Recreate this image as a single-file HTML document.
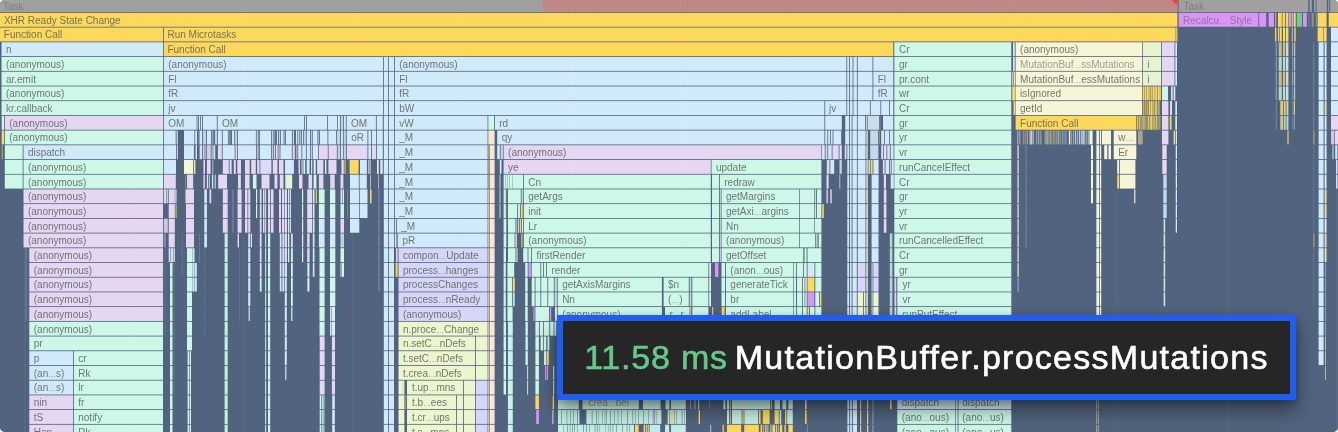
<!DOCTYPE html>
<html lang="en"><head><meta charset="utf-8"><title>Flame chart – MutationBuffer.processMutations</title>
<style>
html,body{margin:0;padding:0;background:#fff;}
body{width:1338px;height:432px;overflow:hidden;position:relative;font-family:"Liberation Sans",sans-serif;}
#chart{position:absolute;left:0;top:0;width:1338px;height:432px;border-radius:5px;overflow:hidden;background:#51637e;}
#chart svg{display:block;}
#chart svg text{font-family:"Liberation Sans",sans-serif;font-size:10px;}
#tip{position:absolute;left:557px;top:315px;width:739px;height:85px;box-sizing:border-box;border:6px solid #1f5eee;background:#262626;
 box-shadow:0 10px 18px rgba(0,0,0,.42),0 2px 6px rgba(0,0,0,.2);color:#fff;font-size:34px;line-height:73px;white-space:nowrap;padding-left:21.2px;letter-spacing:1.27px;-webkit-text-stroke:0.6px currentColor;}
#tip .t{opacity:.999;display:inline-block;will-change:opacity;}
#tip .ms{color:#66c98a;letter-spacing:0.8px;}
#tip .sp{letter-spacing:-2.6px;}
</style></head><body>
<div id="chart">
<svg width="1338" height="432" viewBox="0 0 1338 432">
<defs><filter id="soft" x="0" y="0" width="1338" height="432" filterUnits="userSpaceOnUse"><feGaussianBlur stdDeviation="0.33"/></filter><pattern id="hatch" width="2.2" height="2.2" patternUnits="userSpaceOnUse" patternTransform="rotate(45)"><rect width="2.2" height="2.2" fill="#b29292"/><rect width="1.4" height="2.2" fill="#c88080"/></pattern></defs>
<rect width="1338" height="432" fill="#51637e"/>
<g>
<rect x="0" y="0" width="1177.6" height="12.05" fill="#a0a0a0"/>
<rect x="1178.6" y="0" width="129.6" height="12.05" fill="#a0a0a0"/>
<rect x="1309.6" y="0" width="2.2" height="12.05" fill="#a0a0a0"/>
<rect x="1314" y="0" width="1.6" height="12.05" fill="#a0a0a0"/>
<rect x="1316.5" y="0" width="10.3" height="12.05" fill="#a0a0a0"/>
<rect x="1328.2" y="0" width="1" height="12.05" fill="#a0a0a0"/>
<rect x="1330.2" y="0" width="7.8" height="12.05" fill="#a0a0a0"/>
<rect x="0" y="12.85" width="1177.4" height="13.91" fill="#fcd95b"/>
<rect x="1178.6" y="12.85" width="79.8" height="13.91" fill="#d795f6"/>
<rect x="1259.2" y="12.85" width="7" height="13.91" fill="#d795f6"/>
<rect x="1268.6" y="12.85" width="5.4" height="13.91" fill="#d795f6"/>
<rect x="1275" y="12.85" width="1.3" height="13.91" fill="#b9ab68"/>
<rect x="1278" y="12.85" width="3.8" height="13.91" fill="#fcd95b"/>
<rect x="1282.5" y="12.85" width="2.7" height="13.91" fill="#fcd95b"/>
<rect x="1286" y="12.85" width="2.4" height="13.91" fill="#fcd95b"/>
<rect x="1289" y="12.85" width="2.2" height="13.91" fill="#d795f6"/>
<rect x="1291.6" y="12.85" width="1.4" height="13.91" fill="#b9b9b9"/>
<rect x="1293.6" y="12.85" width="2.1" height="13.91" fill="#fcd95b"/>
<rect x="1296.8" y="12.85" width="5.2" height="13.91" fill="#6ecf8b"/>
<rect x="1303" y="12.85" width="3.8" height="13.91" fill="#d795f6"/>
<rect x="1308.4" y="12.85" width="1.1" height="13.91" fill="#71839c"/>
<rect x="1311.6" y="12.85" width="2.1" height="13.91" fill="#9a966f"/>
<rect x="1315.8" y="12.85" width="1" height="13.91" fill="#8a9bb5"/>
<rect x="1317.6" y="12.85" width="9" height="13.91" fill="#fcd95b"/>
<rect x="1328.7" y="12.85" width="9.3" height="13.91" fill="#fcd95b"/>
<rect x="0" y="27.56" width="163" height="13.91" fill="#fcd95b"/>
<rect x="163.8" y="27.56" width="1011.8" height="13.91" fill="#fcd95b"/>
<rect x="1176.2" y="27.56" width="1.2" height="13.91" fill="#fcd95b"/>
<rect x="1275" y="27.56" width="1.3" height="13.91" fill="#fcd95b"/>
<rect x="1278" y="27.56" width="1.3" height="13.91" fill="#fcd95b"/>
<rect x="1280" y="27.56" width="1.8" height="13.91" fill="#fcd95b"/>
<rect x="1283" y="27.56" width="2.2" height="13.91" fill="#fcd95b"/>
<rect x="1286" y="27.56" width="2.4" height="13.91" fill="#fcd95b"/>
<rect x="1291.8" y="27.56" width="0.8" height="13.91" fill="#e5d6f2"/>
<rect x="1294.3" y="27.56" width="1.4" height="13.91" fill="#fcd95b"/>
<rect x="1317.6" y="27.56" width="5.8" height="13.91" fill="#fcd95b"/>
<rect x="1323.9" y="27.56" width="2.7" height="13.91" fill="#fcd95b"/>
<rect x="1331" y="27.56" width="7" height="13.91" fill="#d0eaf9"/>
<rect x="1.5" y="42.27" width="161.5" height="13.91" fill="#d0eaf9"/>
<rect x="1.5" y="56.98" width="161.5" height="13.91" fill="#cdf8e8"/>
<rect x="1.5" y="71.69" width="161.5" height="13.91" fill="#cdf8e8"/>
<rect x="1.5" y="86.4" width="161.5" height="13.91" fill="#cdf8e8"/>
<rect x="1.5" y="101.11" width="161.5" height="13.91" fill="#cdf8e8"/>
<rect x="1.7" y="115.82" width="2.3" height="13.91" fill="#d6f3ea"/>
<rect x="4.8" y="115.82" width="158.2" height="13.91" fill="#e5d6f2"/>
<rect x="1.7" y="130.53" width="2.3" height="13.91" fill="#fcd95b"/>
<rect x="4.8" y="130.53" width="158.2" height="13.91" fill="#cdf8e8"/>
<rect x="1.7" y="145.24" width="1" height="13.91" fill="#c9b15c"/>
<rect x="4.8" y="145.24" width="17.9" height="13.91" fill="#cdf8e8"/>
<rect x="23.5" y="145.24" width="139.5" height="13.91" fill="#d0eaf9"/>
<rect x="4.8" y="159.95" width="17.9" height="13.91" fill="#cdf8e8"/>
<rect x="23.5" y="159.95" width="139.5" height="13.91" fill="#cdf8e8"/>
<rect x="4.8" y="174.66" width="17.9" height="13.91" fill="#cdf8e8"/>
<rect x="23.5" y="174.66" width="139.5" height="13.91" fill="#cdf8e8"/>
<rect x="23.5" y="189.37" width="139.5" height="13.91" fill="#e5d6f2"/>
<rect x="23.5" y="204.08" width="139.5" height="13.91" fill="#e5d6f2"/>
<rect x="23.5" y="218.79" width="139.5" height="13.91" fill="#e5d6f2"/>
<rect x="23.5" y="233.5" width="139.5" height="13.91" fill="#e5d6f2"/>
<rect x="25.2" y="248.21" width="2" height="13.91" fill="#64768f"/>
<rect x="29.3" y="248.21" width="133.7" height="13.91" fill="#e5d6f2"/>
<rect x="25.2" y="262.92" width="2" height="13.91" fill="#64768f"/>
<rect x="29.3" y="262.92" width="133.7" height="13.91" fill="#e5d6f2"/>
<rect x="25.2" y="277.63" width="2" height="13.91" fill="#64768f"/>
<rect x="29.3" y="277.63" width="133.7" height="13.91" fill="#e5d6f2"/>
<rect x="25.2" y="292.34" width="2" height="13.91" fill="#64768f"/>
<rect x="29.3" y="292.34" width="133.7" height="13.91" fill="#e5d6f2"/>
<rect x="25.2" y="307.05" width="2" height="13.91" fill="#64768f"/>
<rect x="29.3" y="307.05" width="133.7" height="13.91" fill="#e5d6f2"/>
<rect x="29.3" y="321.76" width="133.7" height="13.91" fill="#cdf8e8"/>
<rect x="29.3" y="336.47" width="133.7" height="13.91" fill="#cdf8e8"/>
<rect x="29.3" y="351.18" width="43.7" height="13.91" fill="#d0eaf9"/>
<rect x="73.8" y="351.18" width="89.2" height="13.91" fill="#cdf8e8"/>
<rect x="29.3" y="365.89" width="43.7" height="13.91" fill="#d0eaf9"/>
<rect x="73.8" y="365.89" width="89.2" height="13.91" fill="#cdf8e8"/>
<rect x="29.3" y="380.6" width="43.7" height="13.91" fill="#d0eaf9"/>
<rect x="73.8" y="380.6" width="89.2" height="13.91" fill="#cdf8e8"/>
<rect x="29.3" y="395.31" width="43.7" height="13.91" fill="#e5d6f2"/>
<rect x="73.8" y="395.31" width="89.2" height="13.91" fill="#cdf8e8"/>
<rect x="29.3" y="410.02" width="43.7" height="13.91" fill="#e5d6f2"/>
<rect x="73.8" y="410.02" width="89.2" height="13.91" fill="#cdf8e8"/>
<rect x="29.3" y="424.73" width="43.7" height="13.91" fill="#e5d6f2"/>
<rect x="73.8" y="424.73" width="89.2" height="13.91" fill="#cdf8e8"/>
<rect x="163.8" y="42.27" width="729.5" height="13.91" fill="#fcd95b"/>
<rect x="163.8" y="56.98" width="219.2" height="13.91" fill="#d0eaf9"/>
<rect x="163.8" y="71.69" width="219.2" height="13.91" fill="#d0eaf9"/>
<rect x="163.8" y="86.4" width="219.2" height="13.91" fill="#d0eaf9"/>
<rect x="163.8" y="101.11" width="219.2" height="13.91" fill="#d0eaf9"/>
<rect x="163.8" y="115.82" width="32.8" height="13.91" fill="#d0eaf9"/>
<rect x="197.4" y="115.82" width="0.8" height="13.91" fill="#d0eaf9"/>
<rect x="199" y="115.82" width="1" height="13.91" fill="#d0eaf9"/>
<rect x="200.8" y="115.82" width="1.3" height="13.91" fill="#d0eaf9"/>
<rect x="202.9" y="115.82" width="13.9" height="13.91" fill="#d0eaf9"/>
<rect x="217.6" y="115.82" width="86.6" height="13.91" fill="#d0eaf9"/>
<rect x="305" y="115.82" width="1" height="13.91" fill="#d0eaf9"/>
<rect x="306.8" y="115.82" width="20.4" height="13.91" fill="#d0eaf9"/>
<rect x="328" y="115.82" width="9.2" height="13.91" fill="#d0eaf9"/>
<rect x="338" y="115.82" width="2" height="13.91" fill="#d0eaf9"/>
<rect x="340.8" y="115.82" width="2.2" height="13.91" fill="#bfd2e4"/>
<rect x="343.8" y="115.82" width="2" height="13.91" fill="#d0eaf9"/>
<rect x="346.6" y="115.82" width="29.3" height="13.91" fill="#d0eaf9"/>
<rect x="376.7" y="115.82" width="6.1" height="13.91" fill="#d0eaf9"/>
<rect x="163.8" y="130.53" width="11.9" height="13.91" fill="#d0eaf9"/>
<rect x="176.5" y="130.53" width="1.4" height="13.91" fill="#bfd2e4"/>
<rect x="184" y="130.53" width="10.4" height="13.91" fill="#d0eaf9"/>
<rect x="195.2" y="130.53" width="1.8" height="13.91" fill="#d0eaf9"/>
<rect x="197.8" y="130.53" width="0.9" height="13.91" fill="#7488a4"/>
<rect x="199.5" y="130.53" width="2.6" height="13.91" fill="#d0eaf9"/>
<rect x="202.9" y="130.53" width="3.3" height="13.91" fill="#bfd2e4"/>
<rect x="207" y="130.53" width="4.1" height="13.91" fill="#d0eaf9"/>
<rect x="211.9" y="130.53" width="0.6" height="13.91" fill="#d0eaf9"/>
<rect x="213.3" y="130.53" width="0.8" height="13.91" fill="#7488a4"/>
<rect x="214.9" y="130.53" width="2.1" height="13.91" fill="#bfd2e4"/>
<rect x="217.8" y="130.53" width="4.1" height="13.91" fill="#d0eaf9"/>
<rect x="222.7" y="130.53" width="5.2" height="13.91" fill="#d0eaf9"/>
<rect x="228.7" y="130.53" width="0.6" height="13.91" fill="#d0eaf9"/>
<rect x="230.1" y="130.53" width="1.1" height="13.91" fill="#7488a4"/>
<rect x="232" y="130.53" width="2.3" height="13.91" fill="#d0eaf9"/>
<rect x="235.1" y="130.53" width="2.1" height="13.91" fill="#bfd2e4"/>
<rect x="238" y="130.53" width="17.9" height="13.91" fill="#d0eaf9"/>
<rect x="256.7" y="130.53" width="1.1" height="13.91" fill="#d0eaf9"/>
<rect x="258.6" y="130.53" width="0.4" height="13.91" fill="#bfd2e4"/>
<rect x="259.8" y="130.53" width="11.4" height="13.91" fill="#d0eaf9"/>
<rect x="272" y="130.53" width="1.5" height="13.91" fill="#bfd2e4"/>
<rect x="274.3" y="130.53" width="0.4" height="13.91" fill="#d0eaf9"/>
<rect x="275.5" y="130.53" width="0.6" height="13.91" fill="#7488a4"/>
<rect x="276.9" y="130.53" width="1.1" height="13.91" fill="#d0eaf9"/>
<rect x="278.8" y="130.53" width="1.4" height="13.91" fill="#bfd2e4"/>
<rect x="281" y="130.53" width="2.6" height="13.91" fill="#d0eaf9"/>
<rect x="284.4" y="130.53" width="0.7" height="13.91" fill="#bfd2e4"/>
<rect x="285.9" y="130.53" width="6" height="13.91" fill="#d0eaf9"/>
<rect x="292.7" y="130.53" width="1.4" height="13.91" fill="#bfd2e4"/>
<rect x="294.9" y="130.53" width="0.35" height="13.91" fill="#7488a4"/>
<rect x="296" y="130.53" width="1.4" height="13.91" fill="#d0eaf9"/>
<rect x="298.2" y="130.53" width="1.2" height="13.91" fill="#d0eaf9"/>
<rect x="300.2" y="130.53" width="0.8" height="13.91" fill="#bfd2e4"/>
<rect x="301.8" y="130.53" width="1.4" height="13.91" fill="#d0eaf9"/>
<rect x="304" y="130.53" width="1.9" height="13.91" fill="#bfd2e4"/>
<rect x="306.7" y="130.53" width="3.3" height="13.91" fill="#d0eaf9"/>
<rect x="310.8" y="130.53" width="1.1" height="13.91" fill="#bfd2e4"/>
<rect x="312.7" y="130.53" width="4.8" height="13.91" fill="#d0eaf9"/>
<rect x="318.3" y="130.53" width="0.9" height="13.91" fill="#bfd2e4"/>
<rect x="320" y="130.53" width="7.5" height="13.91" fill="#d0eaf9"/>
<rect x="328.3" y="130.53" width="7.9" height="13.91" fill="#d0eaf9"/>
<rect x="337" y="130.53" width="3.2" height="13.91" fill="#bfd2e4"/>
<rect x="341" y="130.53" width="1.9" height="13.91" fill="#d0eaf9"/>
<rect x="343.7" y="130.53" width="2.2" height="13.91" fill="#bfd2e4"/>
<rect x="346.7" y="130.53" width="20.8" height="13.91" fill="#d0eaf9"/>
<rect x="368.3" y="130.53" width="2.8" height="13.91" fill="#d0eaf9"/>
<rect x="371.9" y="130.53" width="4.3" height="13.91" fill="#d0eaf9"/>
<rect x="377" y="130.53" width="5.8" height="13.91" fill="#d0eaf9"/>
<rect x="163.8" y="145.24" width="12.2" height="13.91" fill="#d0eaf9"/>
<rect x="176.8" y="145.24" width="1.1" height="13.91" fill="#e5d6f2"/>
<rect x="184" y="145.24" width="9.9" height="13.91" fill="#d0eaf9"/>
<rect x="194.7" y="145.24" width="0.35" height="13.91" fill="#7488a4"/>
<rect x="195.6" y="145.24" width="1.4" height="13.91" fill="#d0eaf9"/>
<rect x="199.6" y="145.24" width="2.5" height="13.91" fill="#e5d6f2"/>
<rect x="202.9" y="145.24" width="1.7" height="13.91" fill="#d5cde5"/>
<rect x="205.4" y="145.24" width="0.8" height="13.91" fill="#d0eaf9"/>
<rect x="207" y="145.24" width="3.8" height="13.91" fill="#d5cde5"/>
<rect x="211.6" y="145.24" width="1" height="13.91" fill="#d0eaf9"/>
<rect x="213.4" y="145.24" width="1.8" height="13.91" fill="#d0eaf9"/>
<rect x="217.9" y="145.24" width="3.9" height="13.91" fill="#e5d6f2"/>
<rect x="222.6" y="145.24" width="12.1" height="13.91" fill="#d0eaf9"/>
<rect x="235.5" y="145.24" width="1.7" height="13.91" fill="#e5d6f2"/>
<rect x="238" y="145.24" width="18" height="13.91" fill="#d0eaf9"/>
<rect x="256.8" y="145.24" width="1" height="13.91" fill="#e5d6f2"/>
<rect x="258.6" y="145.24" width="0.4" height="13.91" fill="#d0eaf9"/>
<rect x="259.8" y="145.24" width="11.4" height="13.91" fill="#d0eaf9"/>
<rect x="272" y="145.24" width="1.2" height="13.91" fill="#bfd2e4"/>
<rect x="274" y="145.24" width="1.2" height="13.91" fill="#e5d6f2"/>
<rect x="276" y="145.24" width="1.7" height="13.91" fill="#d0eaf9"/>
<rect x="278.5" y="145.24" width="1.1" height="13.91" fill="#e5d6f2"/>
<rect x="280.4" y="145.24" width="11.5" height="13.91" fill="#d0eaf9"/>
<rect x="292.7" y="145.24" width="2.1" height="13.91" fill="#e5d6f2"/>
<rect x="295.6" y="145.24" width="0.35" height="13.91" fill="#7488a4"/>
<rect x="296.4" y="145.24" width="1" height="13.91" fill="#e5d6f2"/>
<rect x="298.2" y="145.24" width="3.3" height="13.91" fill="#d0eaf9"/>
<rect x="302.3" y="145.24" width="3.6" height="13.91" fill="#d0eaf9"/>
<rect x="306.7" y="145.24" width="3.3" height="13.91" fill="#d0eaf9"/>
<rect x="310.8" y="145.24" width="1.1" height="13.91" fill="#e5d6f2"/>
<rect x="312.7" y="145.24" width="5.5" height="13.91" fill="#d0eaf9"/>
<rect x="319" y="145.24" width="8.8" height="13.91" fill="#e5d6f2"/>
<rect x="328.6" y="145.24" width="8.3" height="13.91" fill="#e5d6f2"/>
<rect x="337.7" y="145.24" width="2.5" height="13.91" fill="#bfd2e4"/>
<rect x="341" y="145.24" width="1.9" height="13.91" fill="#d0eaf9"/>
<rect x="343.7" y="145.24" width="2.4" height="13.91" fill="#bfd2e4"/>
<rect x="346.9" y="145.24" width="20.6" height="13.91" fill="#e5d6f2"/>
<rect x="368.3" y="145.24" width="2.8" height="13.91" fill="#d0eaf9"/>
<rect x="371.9" y="145.24" width="4.3" height="13.91" fill="#e5d6f2"/>
<rect x="377" y="145.24" width="5.8" height="13.91" fill="#d0eaf9"/>
<rect x="163.8" y="159.95" width="12.2" height="13.91" fill="#d0eaf9"/>
<rect x="184" y="159.95" width="9.2" height="13.91" fill="#f6f5d5"/>
<rect x="194" y="159.95" width="1.4" height="13.91" fill="#f1e7a6"/>
<rect x="203.4" y="159.95" width="1.6" height="13.91" fill="#e5d6f2"/>
<rect x="206.9" y="159.95" width="3.7" height="13.91" fill="#e5d6f2"/>
<rect x="212.5" y="159.95" width="0.7" height="13.91" fill="#e5d6f2"/>
<rect x="222.8" y="159.95" width="6" height="13.91" fill="#e5d6f2"/>
<rect x="229.6" y="159.95" width="2" height="13.91" fill="#d0eaf9"/>
<rect x="233.8" y="159.95" width="2" height="13.91" fill="#e5d6f2"/>
<rect x="237.3" y="159.95" width="3.7" height="13.91" fill="#e5d6f2"/>
<rect x="245" y="159.95" width="4.7" height="13.91" fill="#e5d6f2"/>
<rect x="251.2" y="159.95" width="4.6" height="13.91" fill="#e5d6f2"/>
<rect x="257.2" y="159.95" width="2.3" height="13.91" fill="#e5d6f2"/>
<rect x="260.3" y="159.95" width="11.1" height="13.91" fill="#dcdaf5"/>
<rect x="272.8" y="159.95" width="4.7" height="13.91" fill="#e5d6f2"/>
<rect x="279" y="159.95" width="4.5" height="13.91" fill="#e5d6f2"/>
<rect x="285" y="159.95" width="8.9" height="13.91" fill="#d0eaf9"/>
<rect x="298.5" y="159.95" width="1.5" height="13.91" fill="#e5d6f2"/>
<rect x="301.5" y="159.95" width="1.1" height="13.91" fill="#e5d6f2"/>
<rect x="303.4" y="159.95" width="1.8" height="13.91" fill="#cdf8e8"/>
<rect x="306.7" y="159.95" width="2.9" height="13.91" fill="#d0eaf9"/>
<rect x="311" y="159.95" width="1.2" height="13.91" fill="#e5d6f2"/>
<rect x="313.6" y="159.95" width="2.1" height="13.91" fill="#cdf8e8"/>
<rect x="317.1" y="159.95" width="6.3" height="13.91" fill="#e5d6f2"/>
<rect x="325" y="159.95" width="1.4" height="13.91" fill="#cdf8e8"/>
<rect x="328.4" y="159.95" width="8.1" height="13.91" fill="#e5d6f2"/>
<rect x="341.4" y="159.95" width="2.4" height="13.91" fill="#e5d6f2"/>
<rect x="344.6" y="159.95" width="0.9" height="13.91" fill="#fcd95b"/>
<rect x="349.6" y="159.95" width="9" height="13.91" fill="#fcd95b"/>
<rect x="360" y="159.95" width="6.9" height="13.91" fill="#d0eaf9"/>
<rect x="368.3" y="159.95" width="1.1" height="13.91" fill="#d0eaf9"/>
<rect x="370.2" y="159.95" width="0.6" height="13.91" fill="#f1e7a6"/>
<rect x="377" y="159.95" width="1.7" height="13.91" fill="#cdf8e8"/>
<rect x="380.2" y="159.95" width="2.6" height="13.91" fill="#e5d6f2"/>
<rect x="163.8" y="174.66" width="12" height="13.91" fill="#e5d6f2"/>
<rect x="185.5" y="174.66" width="0.35" height="13.91" fill="#fcd95b"/>
<rect x="187" y="174.66" width="6.2" height="13.91" fill="#e5d6f2"/>
<rect x="203.4" y="174.66" width="1.4" height="13.91" fill="#e5d6f2"/>
<rect x="206.8" y="174.66" width="1.4" height="13.91" fill="#e5d6f2"/>
<rect x="209" y="174.66" width="0.7" height="13.91" fill="#d0eaf9"/>
<rect x="212" y="174.66" width="1.2" height="13.91" fill="#cdf8e8"/>
<rect x="214.7" y="174.66" width="1" height="13.91" fill="#e5d6f2"/>
<rect x="218.2" y="174.66" width="8.8" height="13.91" fill="#e5d6f2"/>
<rect x="238" y="174.66" width="2.9" height="13.91" fill="#e5d6f2"/>
<rect x="245" y="174.66" width="4.6" height="13.91" fill="#e5d6f2"/>
<rect x="252.9" y="174.66" width="3.6" height="13.91" fill="#cdf8e8"/>
<rect x="261.5" y="174.66" width="8" height="13.91" fill="#e5d6f2"/>
<rect x="274.5" y="174.66" width="2.9" height="13.91" fill="#e5d6f2"/>
<rect x="279.8" y="174.66" width="3.7" height="13.91" fill="#e5d6f2"/>
<rect x="285.3" y="174.66" width="6.9" height="13.91" fill="#e2f3d6"/>
<rect x="299" y="174.66" width="3.5" height="13.91" fill="#e5d6f2"/>
<rect x="308.5" y="174.66" width="3.6" height="13.91" fill="#e5d6f2"/>
<rect x="313.6" y="174.66" width="2.8" height="13.91" fill="#cdf8e8"/>
<rect x="318.9" y="174.66" width="4.5" height="13.91" fill="#e5d6f2"/>
<rect x="330.2" y="174.66" width="4.5" height="13.91" fill="#e5d6f2"/>
<rect x="340.5" y="174.66" width="2.9" height="13.91" fill="#e5d6f2"/>
<rect x="350" y="174.66" width="8.8" height="13.91" fill="#d0eaf9"/>
<rect x="359.6" y="174.66" width="7.2" height="13.91" fill="#d0eaf9"/>
<rect x="370" y="174.66" width="0.7" height="13.91" fill="#e5d6f2"/>
<rect x="378" y="174.66" width="0.6" height="13.91" fill="#d0eaf9"/>
<rect x="163.8" y="189.37" width="2.2" height="13.91" fill="#e5d6f2"/>
<rect x="166.6" y="189.37" width="1.2" height="13.91" fill="#cdf8e8"/>
<rect x="175.3" y="189.37" width="1.2" height="13.91" fill="#cdf8e8"/>
<rect x="175.6" y="204.08" width="0.9" height="13.91" fill="#fcd95b"/>
<rect x="163.8" y="218.79" width="4" height="13.91" fill="#cfc6e0"/>
<rect x="163.8" y="233.5" width="1.8" height="13.91" fill="#8b93ad"/>
<rect x="168.7" y="189.37" width="6.1" height="13.91" fill="#e5d6f2"/>
<rect x="168.7" y="204.08" width="6.1" height="13.91" fill="#e5d6f2"/>
<rect x="168.7" y="218.79" width="6.1" height="13.91" fill="#e5d6f2"/>
<rect x="168.7" y="233.5" width="6.1" height="13.91" fill="#e5d6f2"/>
<rect x="168.7" y="248.21" width="1.5" height="13.91" fill="#d0eaf9"/>
<rect x="170.6" y="248.21" width="2.6" height="13.91" fill="#e5d6f2"/>
<rect x="173.6" y="248.21" width="1.2" height="13.91" fill="#cdf8e8"/>
<rect x="170" y="262.92" width="2.5" height="13.91" fill="#cdf8e8"/>
<rect x="170" y="277.63" width="2.5" height="13.91" fill="#cdf8e8"/>
<rect x="170" y="292.34" width="2.5" height="13.91" fill="#cdf8e8"/>
<rect x="170" y="307.05" width="2.5" height="13.91" fill="#cdf8e8"/>
<rect x="170" y="321.76" width="2.5" height="13.91" fill="#cdf8e8"/>
<rect x="170" y="336.47" width="2.5" height="13.91" fill="#cdf8e8"/>
<rect x="170" y="351.18" width="2.5" height="13.91" fill="#cdf8e8"/>
<rect x="170" y="365.89" width="2.5" height="13.91" fill="#cdf8e8"/>
<rect x="170" y="380.6" width="2.5" height="13.91" fill="#cdf8e8"/>
<rect x="170" y="395.31" width="2.5" height="13.91" fill="#cdf8e8"/>
<rect x="170" y="410.02" width="2.5" height="13.91" fill="#cdf8e8"/>
<rect x="170" y="424.73" width="2.5" height="13.91" fill="#cdf8e8"/>
<rect x="164.6" y="248.21" width="0.8" height="13.91" fill="#66788f"/>
<rect x="164.6" y="262.92" width="0.8" height="13.91" fill="#66788f"/>
<rect x="164.6" y="277.63" width="0.8" height="13.91" fill="#66788f"/>
<rect x="164.6" y="292.34" width="0.8" height="13.91" fill="#66788f"/>
<rect x="164.6" y="307.05" width="0.8" height="13.91" fill="#66788f"/>
<rect x="164.6" y="321.76" width="0.8" height="13.91" fill="#66788f"/>
<rect x="173.8" y="262.92" width="0.8" height="13.91" fill="#66788f"/>
<rect x="173.8" y="277.63" width="0.8" height="13.91" fill="#66788f"/>
<rect x="173.8" y="292.34" width="0.8" height="13.91" fill="#66788f"/>
<rect x="173.8" y="307.05" width="0.8" height="13.91" fill="#66788f"/>
<rect x="173.8" y="321.76" width="0.8" height="13.91" fill="#66788f"/>
<rect x="173.8" y="336.47" width="0.8" height="13.91" fill="#66788f"/>
<rect x="173.8" y="351.18" width="0.8" height="13.91" fill="#66788f"/>
<rect x="173.8" y="365.89" width="0.8" height="13.91" fill="#66788f"/>
<rect x="173.8" y="380.6" width="0.8" height="13.91" fill="#66788f"/>
<rect x="186" y="189.37" width="8" height="13.91" fill="#e5d6f2"/>
<rect x="186" y="204.08" width="8" height="13.91" fill="#e5d6f2"/>
<rect x="186" y="218.79" width="8" height="13.91" fill="#e5d6f2"/>
<rect x="186" y="233.5" width="8" height="13.91" fill="#e5d6f2"/>
<rect x="185.2" y="189.37" width="0.6" height="13.91" fill="#fcd95b"/>
<rect x="187" y="248.21" width="5" height="13.91" fill="#cdf8e8"/>
<rect x="187" y="262.92" width="5" height="13.91" fill="#cdf8e8"/>
<rect x="187" y="277.63" width="5" height="13.91" fill="#cdf8e8"/>
<rect x="187" y="292.34" width="5" height="13.91" fill="#cdf8e8"/>
<rect x="187" y="307.05" width="5" height="13.91" fill="#cdf8e8"/>
<rect x="187" y="321.76" width="5" height="13.91" fill="#cdf8e8"/>
<rect x="187" y="336.47" width="5" height="13.91" fill="#cdf8e8"/>
<rect x="192.3" y="248.21" width="2.2" height="13.91" fill="#d0eaf9"/>
<rect x="192.3" y="262.92" width="2.2" height="13.91" fill="#d0eaf9"/>
<rect x="192.3" y="277.63" width="2.2" height="13.91" fill="#d0eaf9"/>
<rect x="194.9" y="262.92" width="1.9" height="13.91" fill="#d0eaf9"/>
<rect x="194.9" y="277.63" width="1.9" height="13.91" fill="#d0eaf9"/>
<rect x="187.6" y="351.18" width="1.4" height="13.91" fill="#cdf8e8"/>
<rect x="187.6" y="365.89" width="1.4" height="13.91" fill="#cdf8e8"/>
<rect x="187.6" y="380.6" width="1.4" height="13.91" fill="#cdf8e8"/>
<rect x="187.6" y="395.31" width="1.4" height="13.91" fill="#cdf8e8"/>
<rect x="187.6" y="410.02" width="1.4" height="13.91" fill="#cdf8e8"/>
<rect x="187.6" y="424.73" width="1.4" height="13.91" fill="#cdf8e8"/>
<rect x="189.6" y="351.18" width="1.4" height="13.91" fill="#cdf8e8"/>
<rect x="189.6" y="365.89" width="1.4" height="13.91" fill="#cdf8e8"/>
<rect x="189.6" y="380.6" width="1.4" height="13.91" fill="#cdf8e8"/>
<rect x="189.6" y="395.31" width="1.4" height="13.91" fill="#cdf8e8"/>
<rect x="189.6" y="410.02" width="1.4" height="13.91" fill="#cdf8e8"/>
<rect x="189.6" y="424.73" width="1.4" height="13.91" fill="#cdf8e8"/>
<rect x="181.8" y="233.5" width="0.8" height="13.91" fill="#6b7c97"/>
<rect x="181.8" y="248.21" width="0.8" height="13.91" fill="#6b7c97"/>
<rect x="181.8" y="262.92" width="0.8" height="13.91" fill="#6b7c97"/>
<rect x="199.2" y="233.5" width="0.8" height="13.91" fill="#6b7c97"/>
<rect x="199.2" y="248.21" width="0.8" height="13.91" fill="#6b7c97"/>
<rect x="204.3" y="189.37" width="2.6" height="13.91" fill="#d0eaf9"/>
<rect x="204.3" y="204.08" width="2.6" height="13.91" fill="#d0eaf9"/>
<rect x="204.3" y="218.79" width="2.6" height="13.91" fill="#d0eaf9"/>
<rect x="204.3" y="233.5" width="2.6" height="13.91" fill="#d0eaf9"/>
<rect x="204.4" y="248.21" width="0.8" height="13.91" fill="#66788f"/>
<rect x="204.4" y="262.92" width="0.8" height="13.91" fill="#66788f"/>
<rect x="204.4" y="277.63" width="0.8" height="13.91" fill="#66788f"/>
<rect x="204.4" y="292.34" width="0.8" height="13.91" fill="#66788f"/>
<rect x="204.4" y="307.05" width="0.8" height="13.91" fill="#66788f"/>
<rect x="204.4" y="321.76" width="0.8" height="13.91" fill="#66788f"/>
<rect x="209.5" y="189.37" width="1.7" height="13.91" fill="#e5d6f2"/>
<rect x="222.8" y="189.37" width="4.9" height="13.91" fill="#e5d6f2"/>
<rect x="222.8" y="204.08" width="4.9" height="13.91" fill="#e5d6f2"/>
<rect x="222.8" y="218.79" width="4.9" height="13.91" fill="#e5d6f2"/>
<rect x="224.6" y="233.5" width="3.1" height="13.91" fill="#c2efdf"/>
<rect x="224.6" y="248.21" width="3.1" height="13.91" fill="#c2efdf"/>
<rect x="224.6" y="262.92" width="3.1" height="13.91" fill="#c2efdf"/>
<rect x="224.6" y="277.63" width="3.1" height="13.91" fill="#c2efdf"/>
<rect x="224.6" y="292.34" width="3.1" height="13.91" fill="#c2efdf"/>
<rect x="224.6" y="307.05" width="3.1" height="13.91" fill="#c2efdf"/>
<rect x="224.6" y="321.76" width="3.1" height="13.91" fill="#c2efdf"/>
<rect x="224.6" y="336.47" width="3.1" height="13.91" fill="#c2efdf"/>
<rect x="224.6" y="351.18" width="3.1" height="13.91" fill="#c2efdf"/>
<rect x="224.6" y="365.89" width="3.1" height="13.91" fill="#c2efdf"/>
<rect x="224.6" y="380.6" width="3.1" height="13.91" fill="#c2efdf"/>
<rect x="224.6" y="395.31" width="3.1" height="13.91" fill="#c2efdf"/>
<rect x="224.6" y="410.02" width="3.1" height="13.91" fill="#c2efdf"/>
<rect x="224.6" y="424.73" width="3.1" height="13.91" fill="#c2efdf"/>
<rect x="232.4" y="189.37" width="1" height="13.91" fill="#7d8fa8"/>
<rect x="232.4" y="204.08" width="1" height="13.91" fill="#7d8fa8"/>
<rect x="232.4" y="218.79" width="1" height="13.91" fill="#7d8fa8"/>
<rect x="237.6" y="189.37" width="4" height="13.91" fill="#e5d6f2"/>
<rect x="237.6" y="204.08" width="4" height="13.91" fill="#e5d6f2"/>
<rect x="237.6" y="218.79" width="4" height="13.91" fill="#e5d6f2"/>
<rect x="237.6" y="233.5" width="1.4" height="13.91" fill="#e5d6f2"/>
<rect x="239" y="248.21" width="0.8" height="13.91" fill="#66788f"/>
<rect x="239" y="262.92" width="0.8" height="13.91" fill="#66788f"/>
<rect x="239" y="277.63" width="0.8" height="13.91" fill="#66788f"/>
<rect x="239" y="292.34" width="0.8" height="13.91" fill="#66788f"/>
<rect x="239" y="307.05" width="0.8" height="13.91" fill="#66788f"/>
<rect x="245" y="189.37" width="2.5" height="13.91" fill="#e5d6f2"/>
<rect x="245" y="204.08" width="2.5" height="13.91" fill="#e5d6f2"/>
<rect x="245" y="218.79" width="2.5" height="13.91" fill="#e5d6f2"/>
<rect x="248.2" y="189.37" width="2.1" height="13.91" fill="#e5d6f2"/>
<rect x="248.2" y="204.08" width="2.1" height="13.91" fill="#e5d6f2"/>
<rect x="248.2" y="218.79" width="2.1" height="13.91" fill="#e5d6f2"/>
<rect x="248.2" y="233.5" width="2.1" height="13.91" fill="#e5d6f2"/>
<rect x="248.2" y="248.21" width="2.1" height="13.91" fill="#d0eaf9"/>
<rect x="248.2" y="262.92" width="2.1" height="13.91" fill="#d0eaf9"/>
<rect x="248.2" y="277.63" width="2.1" height="13.91" fill="#d0eaf9"/>
<rect x="248.2" y="292.34" width="2.1" height="13.91" fill="#d0eaf9"/>
<rect x="251" y="233.5" width="1" height="13.91" fill="#d0eaf9"/>
<rect x="248.6" y="307.05" width="1.2" height="13.91" fill="#d0eaf9"/>
<rect x="259.8" y="189.37" width="1.8" height="13.91" fill="#e5d6f2"/>
<rect x="259.8" y="204.08" width="1.8" height="13.91" fill="#e5d6f2"/>
<rect x="259.8" y="218.79" width="1.8" height="13.91" fill="#e5d6f2"/>
<rect x="259.8" y="233.5" width="1.8" height="13.91" fill="#e5d6f2"/>
<rect x="259.8" y="248.21" width="1.8" height="13.91" fill="#e5d6f2"/>
<rect x="259.8" y="262.92" width="1.8" height="13.91" fill="#e5d6f2"/>
<rect x="259.8" y="277.63" width="1.8" height="13.91" fill="#cdf8e8"/>
<rect x="263" y="189.37" width="1.5" height="13.91" fill="#e5d6f2"/>
<rect x="263" y="204.08" width="1.5" height="13.91" fill="#e5d6f2"/>
<rect x="263" y="218.79" width="1.5" height="13.91" fill="#e5d6f2"/>
<rect x="265" y="189.37" width="1.2" height="13.91" fill="#b5e2d4"/>
<rect x="265" y="204.08" width="1.2" height="13.91" fill="#b5e2d4"/>
<rect x="265" y="218.79" width="1.2" height="13.91" fill="#b5e2d4"/>
<rect x="265" y="233.5" width="1.2" height="13.91" fill="#b5e2d4"/>
<rect x="265" y="248.21" width="1.2" height="13.91" fill="#b5e2d4"/>
<rect x="265" y="262.92" width="1.2" height="13.91" fill="#b5e2d4"/>
<rect x="265" y="277.63" width="1.2" height="13.91" fill="#b5e2d4"/>
<rect x="265" y="292.34" width="1.2" height="13.91" fill="#b5e2d4"/>
<rect x="265" y="307.05" width="1.2" height="13.91" fill="#b5e2d4"/>
<rect x="265" y="321.76" width="1.2" height="13.91" fill="#b5e2d4"/>
<rect x="265" y="336.47" width="1.2" height="13.91" fill="#b5e2d4"/>
<rect x="265" y="351.18" width="1.2" height="13.91" fill="#b5e2d4"/>
<rect x="265" y="365.89" width="1.2" height="13.91" fill="#b5e2d4"/>
<rect x="265" y="380.6" width="1.2" height="13.91" fill="#b5e2d4"/>
<rect x="265" y="395.31" width="1.2" height="13.91" fill="#b5e2d4"/>
<rect x="265" y="410.02" width="1.2" height="13.91" fill="#b5e2d4"/>
<rect x="265" y="424.73" width="1.2" height="13.91" fill="#b5e2d4"/>
<rect x="268" y="189.37" width="2.2" height="13.91" fill="#e5d6f2"/>
<rect x="268" y="204.08" width="2.2" height="13.91" fill="#e5d6f2"/>
<rect x="268" y="218.79" width="2.2" height="13.91" fill="#e5d6f2"/>
<rect x="268" y="233.5" width="2.2" height="13.91" fill="#cdf8e8"/>
<rect x="268" y="248.21" width="2.2" height="13.91" fill="#cdf8e8"/>
<rect x="268" y="262.92" width="2.2" height="13.91" fill="#cdf8e8"/>
<rect x="268" y="277.63" width="2.2" height="13.91" fill="#cdf8e8"/>
<rect x="268" y="292.34" width="2.2" height="13.91" fill="#cdf8e8"/>
<rect x="268" y="307.05" width="2.2" height="13.91" fill="#cdf8e8"/>
<rect x="268" y="321.76" width="2.2" height="13.91" fill="#cdf8e8"/>
<rect x="268" y="336.47" width="2.2" height="13.91" fill="#cdf8e8"/>
<rect x="268" y="351.18" width="2.2" height="13.91" fill="#cdf8e8"/>
<rect x="268" y="365.89" width="2.2" height="13.91" fill="#cdf8e8"/>
<rect x="268" y="380.6" width="2.2" height="13.91" fill="#cdf8e8"/>
<rect x="268" y="395.31" width="2.2" height="13.91" fill="#cdf8e8"/>
<rect x="268" y="410.02" width="2.2" height="13.91" fill="#cdf8e8"/>
<rect x="268" y="424.73" width="2.2" height="13.91" fill="#cdf8e8"/>
<rect x="271" y="189.37" width="2.5" height="13.91" fill="#e5d6f2"/>
<rect x="271" y="204.08" width="2.5" height="13.91" fill="#e5d6f2"/>
<rect x="271" y="218.79" width="2.5" height="13.91" fill="#e5d6f2"/>
<rect x="256" y="189.37" width="1.2" height="13.91" fill="#cdf8e8"/>
<rect x="256" y="204.08" width="1.2" height="13.91" fill="#cdf8e8"/>
<rect x="279" y="189.37" width="2" height="13.91" fill="#e5d6f2"/>
<rect x="279" y="204.08" width="2" height="13.91" fill="#e5d6f2"/>
<rect x="279" y="218.79" width="2" height="13.91" fill="#e5d6f2"/>
<rect x="282" y="189.37" width="2" height="13.91" fill="#e5d6f2"/>
<rect x="282" y="204.08" width="2" height="13.91" fill="#e5d6f2"/>
<rect x="282" y="218.79" width="2" height="13.91" fill="#e5d6f2"/>
<rect x="279.8" y="233.5" width="1.7" height="13.91" fill="#d0eaf9"/>
<rect x="279.8" y="248.21" width="1.7" height="13.91" fill="#d0eaf9"/>
<rect x="279.8" y="262.92" width="1.7" height="13.91" fill="#d0eaf9"/>
<rect x="279.8" y="277.63" width="1.7" height="13.91" fill="#d0eaf9"/>
<rect x="282.4" y="233.5" width="1.7" height="13.91" fill="#d0eaf9"/>
<rect x="282.4" y="248.21" width="1.7" height="13.91" fill="#d0eaf9"/>
<rect x="282.4" y="262.92" width="1.7" height="13.91" fill="#d0eaf9"/>
<rect x="282.4" y="277.63" width="1.7" height="13.91" fill="#d0eaf9"/>
<rect x="284.6" y="189.37" width="2.4" height="13.91" fill="#e5d6f2"/>
<rect x="284.6" y="204.08" width="2.4" height="13.91" fill="#e5d6f2"/>
<rect x="284.6" y="218.79" width="2.4" height="13.91" fill="#e5d6f2"/>
<rect x="284.6" y="233.5" width="2.4" height="13.91" fill="#e5d6f2"/>
<rect x="284.6" y="248.21" width="2.4" height="13.91" fill="#e5d6f2"/>
<rect x="284.6" y="262.92" width="2.4" height="13.91" fill="#e5d6f2"/>
<rect x="284.8" y="277.63" width="2" height="13.91" fill="#d0eaf9"/>
<rect x="284.8" y="292.34" width="2" height="13.91" fill="#d0eaf9"/>
<rect x="284.8" y="307.05" width="2" height="13.91" fill="#d0eaf9"/>
<rect x="284.8" y="321.76" width="2" height="13.91" fill="#d0eaf9"/>
<rect x="284.8" y="336.47" width="2" height="13.91" fill="#d0eaf9"/>
<rect x="284.8" y="351.18" width="2" height="13.91" fill="#d0eaf9"/>
<rect x="285.2" y="365.89" width="1.2" height="13.91" fill="#d0eaf9"/>
<rect x="288" y="189.37" width="1.3" height="13.91" fill="#cdf8e8"/>
<rect x="288" y="204.08" width="1.3" height="13.91" fill="#cdf8e8"/>
<rect x="288" y="218.79" width="1.3" height="13.91" fill="#cdf8e8"/>
<rect x="288" y="233.5" width="1.3" height="13.91" fill="#cdf8e8"/>
<rect x="288" y="248.21" width="1.3" height="13.91" fill="#cdf8e8"/>
<rect x="290" y="189.37" width="1" height="13.91" fill="#e5d6f2"/>
<rect x="290" y="204.08" width="1" height="13.91" fill="#e5d6f2"/>
<rect x="290" y="218.79" width="1" height="13.91" fill="#e5d6f2"/>
<rect x="291" y="233.5" width="1.8" height="13.91" fill="#e5d6f2"/>
<rect x="291" y="248.21" width="1.8" height="13.91" fill="#cdf8e8"/>
<rect x="291" y="262.92" width="1.8" height="13.91" fill="#cdf8e8"/>
<rect x="291" y="277.63" width="1.8" height="13.91" fill="#cdf8e8"/>
<rect x="291" y="292.34" width="1.8" height="13.91" fill="#cdf8e8"/>
<rect x="291.2" y="307.05" width="1.2" height="13.91" fill="#cdf8e8"/>
<rect x="302" y="189.37" width="1.2" height="13.91" fill="#cdf8e8"/>
<rect x="302" y="204.08" width="1.2" height="13.91" fill="#cdf8e8"/>
<rect x="302" y="218.79" width="1.2" height="13.91" fill="#cdf8e8"/>
<rect x="302" y="233.5" width="1.2" height="13.91" fill="#e2f2fb"/>
<rect x="302" y="248.21" width="1.2" height="13.91" fill="#e2f2fb"/>
<rect x="307.2" y="189.37" width="4.8" height="13.91" fill="#e5d6f2"/>
<rect x="307.2" y="204.08" width="4.8" height="13.91" fill="#e5d6f2"/>
<rect x="307.2" y="218.79" width="4.8" height="13.91" fill="#e5d6f2"/>
<rect x="307.2" y="233.5" width="2.4" height="13.91" fill="#e5d6f2"/>
<rect x="307.2" y="248.21" width="2.4" height="13.91" fill="#e5d6f2"/>
<rect x="307.4" y="262.92" width="2" height="13.91" fill="#cdf8e8"/>
<rect x="307.4" y="277.63" width="2" height="13.91" fill="#cdf8e8"/>
<rect x="312.8" y="189.37" width="1.7" height="13.91" fill="#cdf8e8"/>
<rect x="312.8" y="204.08" width="1.7" height="13.91" fill="#cdf8e8"/>
<rect x="312.8" y="218.79" width="1.7" height="13.91" fill="#cdf8e8"/>
<rect x="312.8" y="233.5" width="1.7" height="13.91" fill="#d0eaf9"/>
<rect x="312.8" y="248.21" width="1.7" height="13.91" fill="#d0eaf9"/>
<rect x="312.8" y="262.92" width="1.7" height="13.91" fill="#e5d6f2"/>
<rect x="315.7" y="189.37" width="1.1" height="13.91" fill="#fcd95b"/>
<rect x="318.9" y="189.37" width="5.7" height="13.91" fill="#cdf8e8"/>
<rect x="318.9" y="204.08" width="5.7" height="13.91" fill="#cdf8e8"/>
<rect x="318.9" y="218.79" width="5.7" height="13.91" fill="#d0eaf9"/>
<rect x="318.9" y="233.5" width="5.7" height="13.91" fill="#d0eaf9"/>
<rect x="319.5" y="248.21" width="5.1" height="13.91" fill="#cdf8e8"/>
<rect x="319.5" y="262.92" width="5.1" height="13.91" fill="#cdf8e8"/>
<rect x="319.5" y="277.63" width="5.1" height="13.91" fill="#cdf8e8"/>
<rect x="319.5" y="292.34" width="5.1" height="13.91" fill="#cdf8e8"/>
<rect x="319.5" y="307.05" width="5.1" height="13.91" fill="#cdf8e8"/>
<rect x="319.5" y="321.76" width="5.1" height="13.91" fill="#cdf8e8"/>
<rect x="319.7" y="336.47" width="4.9" height="13.91" fill="#e5d6f2"/>
<rect x="319.7" y="351.18" width="4.9" height="13.91" fill="#e5d6f2"/>
<rect x="319.7" y="365.89" width="4.9" height="13.91" fill="#e5d6f2"/>
<rect x="319.7" y="380.6" width="4.9" height="13.91" fill="#e5d6f2"/>
<rect x="319.7" y="395.31" width="1.3" height="13.91" fill="#cdf8e8"/>
<rect x="321.6" y="395.31" width="1.2" height="13.91" fill="#cdf8e8"/>
<rect x="323.4" y="395.31" width="1" height="13.91" fill="#cdf8e8"/>
<rect x="319.7" y="410.02" width="1.3" height="13.91" fill="#cdf8e8"/>
<rect x="321.6" y="410.02" width="1.2" height="13.91" fill="#cdf8e8"/>
<rect x="323.4" y="410.02" width="1" height="13.91" fill="#cdf8e8"/>
<rect x="319.7" y="424.73" width="1.3" height="13.91" fill="#cdf8e8"/>
<rect x="321.6" y="424.73" width="1.2" height="13.91" fill="#cdf8e8"/>
<rect x="323.4" y="424.73" width="1" height="13.91" fill="#cdf8e8"/>
<rect x="330" y="189.37" width="5.3" height="13.91" fill="#cdf8e8"/>
<rect x="330" y="204.08" width="5.3" height="13.91" fill="#cdf8e8"/>
<rect x="330" y="218.79" width="5.3" height="13.91" fill="#d0eaf9"/>
<rect x="330" y="233.5" width="5.3" height="13.91" fill="#d0eaf9"/>
<rect x="330" y="248.21" width="5.3" height="13.91" fill="#cdf8e8"/>
<rect x="330" y="262.92" width="5.3" height="13.91" fill="#cdf8e8"/>
<rect x="330" y="277.63" width="5.3" height="13.91" fill="#cdf8e8"/>
<rect x="330" y="292.34" width="5.3" height="13.91" fill="#cdf8e8"/>
<rect x="330" y="307.05" width="1.5" height="13.91" fill="#e5d6f2"/>
<rect x="331.9" y="307.05" width="3.1" height="13.91" fill="#cdf8e8"/>
<rect x="330" y="321.76" width="1.5" height="13.91" fill="#e5d6f2"/>
<rect x="331.9" y="321.76" width="3.1" height="13.91" fill="#cdf8e8"/>
<rect x="331.9" y="336.47" width="3.1" height="13.91" fill="#e5d6f2"/>
<rect x="331.9" y="351.18" width="3.1" height="13.91" fill="#e5d6f2"/>
<rect x="331.9" y="365.89" width="3.1" height="13.91" fill="#e5d6f2"/>
<rect x="331.9" y="380.6" width="3.1" height="13.91" fill="#e5d6f2"/>
<rect x="332.2" y="395.31" width="2.6" height="13.91" fill="#d0eaf9"/>
<rect x="332.2" y="410.02" width="2.6" height="13.91" fill="#d0eaf9"/>
<rect x="332.2" y="424.73" width="2.6" height="13.91" fill="#d0eaf9"/>
<rect x="340.5" y="189.37" width="2" height="13.91" fill="#e5d6f2"/>
<rect x="343" y="189.37" width="1" height="13.91" fill="#cdf8e8"/>
<rect x="340.5" y="204.08" width="3.5" height="13.91" fill="#cdf8e8"/>
<rect x="340.5" y="218.79" width="3.5" height="13.91" fill="#e5d6f2"/>
<rect x="340.5" y="233.5" width="3.5" height="13.91" fill="#bfd2e4"/>
<rect x="340.5" y="248.21" width="3.5" height="13.91" fill="#cdf8e8"/>
<rect x="340.5" y="262.92" width="0.9" height="13.91" fill="#e5d6f2"/>
<rect x="341.8" y="262.92" width="2.2" height="13.91" fill="#cdf8e8"/>
<rect x="350" y="189.37" width="9.3" height="13.91" fill="#d0eaf9"/>
<rect x="350" y="204.08" width="9.3" height="13.91" fill="#d0eaf9"/>
<rect x="350" y="218.79" width="9.3" height="13.91" fill="#d0eaf9"/>
<rect x="360" y="189.37" width="7.5" height="13.91" fill="#d0eaf9"/>
<rect x="360" y="204.08" width="7.5" height="13.91" fill="#d0eaf9"/>
<rect x="370" y="189.37" width="1.5" height="13.91" fill="#fcd95b"/>
<rect x="378.4" y="189.37" width="1.2" height="13.91" fill="#7c8da7"/>
<rect x="378.4" y="204.08" width="1.2" height="13.91" fill="#7c8da7"/>
<rect x="378.4" y="218.79" width="1.2" height="13.91" fill="#7c8da7"/>
<rect x="378.4" y="233.5" width="1.2" height="13.91" fill="#7c8da7"/>
<rect x="378.4" y="248.21" width="1.2" height="13.91" fill="#7c8da7"/>
<rect x="378.4" y="262.92" width="1.2" height="13.91" fill="#7c8da7"/>
<rect x="378.4" y="277.63" width="1.2" height="13.91" fill="#7c8da7"/>
<rect x="347" y="189.37" width="0.8" height="13.91" fill="#7c8da7"/>
<rect x="347" y="204.08" width="0.8" height="13.91" fill="#7c8da7"/>
<rect x="383.8" y="56.98" width="4.2" height="13.91" fill="#d0eaf9"/>
<rect x="388.8" y="56.98" width="5.2" height="13.91" fill="#d0eaf9"/>
<rect x="383.8" y="71.69" width="4.2" height="13.91" fill="#d0eaf9"/>
<rect x="388.8" y="71.69" width="5.2" height="13.91" fill="#d0eaf9"/>
<rect x="383.8" y="86.4" width="4.2" height="13.91" fill="#d0eaf9"/>
<rect x="388.8" y="86.4" width="5.2" height="13.91" fill="#d0eaf9"/>
<rect x="383.8" y="101.11" width="4.2" height="13.91" fill="#d0eaf9"/>
<rect x="388.8" y="101.11" width="5.2" height="13.91" fill="#d0eaf9"/>
<rect x="383.8" y="115.82" width="4.2" height="13.91" fill="#d0eaf9"/>
<rect x="388.8" y="115.82" width="5.2" height="13.91" fill="#d0eaf9"/>
<rect x="383.8" y="130.53" width="4.2" height="13.91" fill="#d0eaf9"/>
<rect x="388.8" y="130.53" width="5.2" height="13.91" fill="#d0eaf9"/>
<rect x="383.8" y="145.24" width="4.2" height="13.91" fill="#d0eaf9"/>
<rect x="388.8" y="145.24" width="5.2" height="13.91" fill="#d0eaf9"/>
<rect x="383.8" y="159.95" width="4.2" height="13.91" fill="#d0eaf9"/>
<rect x="388.8" y="159.95" width="5.2" height="13.91" fill="#d0eaf9"/>
<rect x="383.8" y="174.66" width="4.2" height="13.91" fill="#d0eaf9"/>
<rect x="388.8" y="174.66" width="5.2" height="13.91" fill="#d0eaf9"/>
<rect x="383.8" y="189.37" width="4.2" height="13.91" fill="#d0eaf9"/>
<rect x="388.8" y="189.37" width="5.2" height="13.91" fill="#d0eaf9"/>
<rect x="383.8" y="204.08" width="4.2" height="13.91" fill="#d0eaf9"/>
<rect x="388.8" y="204.08" width="5.2" height="13.91" fill="#d0eaf9"/>
<rect x="383.8" y="218.79" width="4.2" height="13.91" fill="#d0eaf9"/>
<rect x="388.8" y="218.79" width="5.2" height="13.91" fill="#d0eaf9"/>
<rect x="383.8" y="233.5" width="4.2" height="13.91" fill="#d0eaf9"/>
<rect x="388.8" y="233.5" width="5.2" height="13.91" fill="#d0eaf9"/>
<rect x="383.8" y="248.21" width="4.2" height="13.91" fill="#d0eaf9"/>
<rect x="388.8" y="248.21" width="5.2" height="13.91" fill="#d0eaf9"/>
<rect x="383.8" y="262.92" width="4.2" height="13.91" fill="#d0eaf9"/>
<rect x="388.8" y="262.92" width="5.2" height="13.91" fill="#d0eaf9"/>
<rect x="383.8" y="277.63" width="4.2" height="13.91" fill="#d0eaf9"/>
<rect x="388.8" y="277.63" width="5.2" height="13.91" fill="#d0eaf9"/>
<rect x="383.8" y="292.34" width="4.2" height="13.91" fill="#d0eaf9"/>
<rect x="388.8" y="292.34" width="5.2" height="13.91" fill="#d0eaf9"/>
<rect x="383.8" y="307.05" width="4.2" height="13.91" fill="#d0eaf9"/>
<rect x="388.8" y="307.05" width="5.2" height="13.91" fill="#d0eaf9"/>
<rect x="383.8" y="321.76" width="4.2" height="13.91" fill="#d0eaf9"/>
<rect x="388.8" y="321.76" width="5.2" height="13.91" fill="#d0eaf9"/>
<rect x="383.8" y="336.47" width="4.2" height="13.91" fill="#d0eaf9"/>
<rect x="388.8" y="336.47" width="5.2" height="13.91" fill="#d0eaf9"/>
<rect x="383.8" y="351.18" width="4.2" height="13.91" fill="#d0eaf9"/>
<rect x="388.8" y="351.18" width="5.2" height="13.91" fill="#d0eaf9"/>
<rect x="383.8" y="365.89" width="4.2" height="13.91" fill="#d0eaf9"/>
<rect x="388.8" y="365.89" width="5.2" height="13.91" fill="#d0eaf9"/>
<rect x="383.8" y="380.6" width="4.2" height="13.91" fill="#d0eaf9"/>
<rect x="388.8" y="380.6" width="5.2" height="13.91" fill="#d0eaf9"/>
<rect x="383.8" y="395.31" width="4.2" height="13.91" fill="#d0eaf9"/>
<rect x="388.8" y="395.31" width="5.2" height="13.91" fill="#d0eaf9"/>
<rect x="383.8" y="410.02" width="4.2" height="13.91" fill="#d0eaf9"/>
<rect x="388.8" y="410.02" width="5.2" height="13.91" fill="#d0eaf9"/>
<rect x="383.8" y="424.73" width="4.2" height="13.91" fill="#d0eaf9"/>
<rect x="388.8" y="424.73" width="5.2" height="13.91" fill="#d0eaf9"/>
<rect x="394.8" y="56.98" width="451.6" height="13.91" fill="#d0eaf9"/>
<rect x="394.8" y="71.69" width="451.6" height="13.91" fill="#d0eaf9"/>
<rect x="394.8" y="86.4" width="451.6" height="13.91" fill="#d0eaf9"/>
<rect x="394.8" y="101.11" width="429.6" height="13.91" fill="#d0eaf9"/>
<rect x="394.8" y="115.82" width="92.8" height="13.91" fill="#d0eaf9"/>
<rect x="488.3" y="115.82" width="5.7" height="13.91" fill="#cdf8e8"/>
<rect x="494.8" y="115.82" width="329.6" height="13.91" fill="#d0eaf9"/>
<rect x="394.8" y="130.53" width="92.8" height="13.91" fill="#d0eaf9"/>
<rect x="394.8" y="145.24" width="92.8" height="13.91" fill="#d0eaf9"/>
<rect x="394.8" y="159.95" width="92.8" height="13.91" fill="#d0eaf9"/>
<rect x="394.8" y="174.66" width="92.8" height="13.91" fill="#d0eaf9"/>
<rect x="394.8" y="189.37" width="92.8" height="13.91" fill="#d0eaf9"/>
<rect x="394.8" y="204.08" width="92.8" height="13.91" fill="#d0eaf9"/>
<rect x="394.8" y="218.79" width="1.2" height="13.91" fill="#d0eaf9"/>
<rect x="396.8" y="218.79" width="90.8" height="13.91" fill="#d0eaf9"/>
<rect x="394.8" y="233.5" width="1.2" height="13.91" fill="#d0eaf9"/>
<rect x="396.5" y="233.5" width="0.9" height="13.91" fill="#bfd2e4"/>
<rect x="398" y="233.5" width="89.6" height="13.91" fill="#d0eaf9"/>
<rect x="396" y="248.21" width="1.6" height="13.91" fill="#e9d3e6"/>
<rect x="395.6" y="262.92" width="2" height="13.91" fill="#fcd95b"/>
<rect x="398.5" y="248.21" width="89.1" height="13.91" fill="#d6d6f6"/>
<rect x="398.5" y="262.92" width="89.1" height="13.91" fill="#d6d6f6"/>
<rect x="398.5" y="277.63" width="89.1" height="13.91" fill="#d6d6f6"/>
<rect x="398.5" y="292.34" width="89.1" height="13.91" fill="#d6d6f6"/>
<rect x="398.5" y="307.05" width="89.1" height="13.91" fill="#d6d6f6"/>
<rect x="398.5" y="321.76" width="89.1" height="13.91" fill="#ecf5cd"/>
<rect x="398.5" y="336.47" width="76.5" height="13.91" fill="#ecf5cd"/>
<rect x="475.8" y="336.47" width="11.8" height="13.91" fill="#ecf5cd"/>
<rect x="398.5" y="351.18" width="76.5" height="13.91" fill="#ecf5cd"/>
<rect x="475.8" y="351.18" width="11.8" height="13.91" fill="#ecf5cd"/>
<rect x="398.5" y="365.89" width="76.5" height="13.91" fill="#ecf5cd"/>
<rect x="475.8" y="365.89" width="11.8" height="13.91" fill="#ecf5cd"/>
<rect x="398.5" y="380.6" width="5.9" height="13.91" fill="#ecf5cd"/>
<rect x="402.6" y="380.6" width="0.6" height="13.91" fill="#c9d3b5"/>
<rect x="407" y="380.6" width="56" height="13.91" fill="#ecf5cd"/>
<rect x="463.8" y="380.6" width="11.2" height="13.91" fill="#ecf5cd"/>
<rect x="475.8" y="380.6" width="11.8" height="13.91" fill="#d6d6f6"/>
<rect x="398.5" y="395.31" width="5.9" height="13.91" fill="#ecf5cd"/>
<rect x="404.2" y="395.31" width="2" height="13.91" fill="#9b9b7c"/>
<rect x="407" y="395.31" width="49" height="13.91" fill="#ecf5cd"/>
<rect x="456.8" y="395.31" width="6.2" height="13.91" fill="#ecf5cd"/>
<rect x="463.8" y="395.31" width="11.2" height="13.91" fill="#ecf5cd"/>
<rect x="475.8" y="395.31" width="11.8" height="13.91" fill="#d6d6f6"/>
<rect x="398.5" y="410.02" width="5.9" height="13.91" fill="#ecf5cd"/>
<rect x="407" y="410.02" width="49" height="13.91" fill="#ecf5cd"/>
<rect x="456.8" y="410.02" width="6.2" height="13.91" fill="#ecf5cd"/>
<rect x="463.8" y="410.02" width="11.2" height="13.91" fill="#ecf5cd"/>
<rect x="475.8" y="410.02" width="11.8" height="13.91" fill="#d6d6f6"/>
<rect x="398.5" y="424.73" width="5.9" height="13.91" fill="#ecf5cd"/>
<rect x="407" y="424.73" width="49" height="13.91" fill="#ecf5cd"/>
<rect x="456.8" y="424.73" width="6.2" height="13.91" fill="#ecf5cd"/>
<rect x="463.8" y="424.73" width="11.2" height="13.91" fill="#ecf5cd"/>
<rect x="475.8" y="424.73" width="11.8" height="13.91" fill="#d6d6f6"/>
<rect x="488.3" y="130.53" width="6.3" height="13.91" fill="#fbe6d0"/>
<rect x="488.3" y="145.24" width="0.9" height="13.91" fill="#c9b98a"/>
<rect x="489.7" y="145.24" width="4.9" height="13.91" fill="#fbe6d0"/>
<rect x="488.3" y="159.95" width="0.9" height="13.91" fill="#c9b98a"/>
<rect x="489.7" y="159.95" width="4.9" height="13.91" fill="#fbe6d0"/>
<rect x="488.3" y="174.66" width="0.9" height="13.91" fill="#c9b98a"/>
<rect x="489.7" y="174.66" width="4.9" height="13.91" fill="#fbe6d0"/>
<rect x="488.3" y="189.37" width="0.9" height="13.91" fill="#f3e6d2"/>
<rect x="489.7" y="189.37" width="4.9" height="13.91" fill="#fbe6d0"/>
<rect x="488.3" y="204.08" width="0.9" height="13.91" fill="#f3e6d2"/>
<rect x="489.7" y="204.08" width="4.9" height="13.91" fill="#fbe6d0"/>
<rect x="488.3" y="218.79" width="0.9" height="13.91" fill="#f3e6d2"/>
<rect x="489.7" y="218.79" width="4.9" height="13.91" fill="#fbe6d0"/>
<rect x="488.3" y="233.5" width="0.9" height="13.91" fill="#f3e6d2"/>
<rect x="489.7" y="233.5" width="4.9" height="13.91" fill="#fbe6d0"/>
<rect x="488.3" y="248.21" width="0.9" height="13.91" fill="#f3e6d2"/>
<rect x="489.7" y="248.21" width="4.9" height="13.91" fill="#fbe6d0"/>
<rect x="488.3" y="262.92" width="0.9" height="13.91" fill="#f3e6d2"/>
<rect x="489.7" y="262.92" width="4.9" height="13.91" fill="#fbe6d0"/>
<rect x="488.3" y="277.63" width="0.9" height="13.91" fill="#f3e6d2"/>
<rect x="489.7" y="277.63" width="4.9" height="13.91" fill="#fbe6d0"/>
<rect x="488.3" y="292.34" width="0.9" height="13.91" fill="#f3e6d2"/>
<rect x="489.7" y="292.34" width="4.9" height="13.91" fill="#fbe6d0"/>
<rect x="488.3" y="307.05" width="0.9" height="13.91" fill="#f3e6d2"/>
<rect x="489.7" y="307.05" width="4.9" height="13.91" fill="#fbe6d0"/>
<rect x="488.3" y="321.76" width="0.9" height="13.91" fill="#f3e6d2"/>
<rect x="489.7" y="321.76" width="4.9" height="13.91" fill="#fbe6d0"/>
<rect x="488.3" y="336.47" width="0.9" height="13.91" fill="#f3e6d2"/>
<rect x="489.7" y="336.47" width="4.9" height="13.91" fill="#fbe6d0"/>
<rect x="488.3" y="351.18" width="0.9" height="13.91" fill="#f3e6d2"/>
<rect x="489.7" y="351.18" width="4.9" height="13.91" fill="#fbe6d0"/>
<rect x="488.3" y="365.89" width="0.9" height="13.91" fill="#f3e6d2"/>
<rect x="489.7" y="365.89" width="4.9" height="13.91" fill="#fbe6d0"/>
<rect x="488.3" y="380.6" width="0.9" height="13.91" fill="#f3e6d2"/>
<rect x="489.7" y="380.6" width="4.9" height="13.91" fill="#fbe6d0"/>
<rect x="488.3" y="395.31" width="0.9" height="13.91" fill="#f3e6d2"/>
<rect x="489.7" y="395.31" width="4.9" height="13.91" fill="#fbe6d0"/>
<rect x="488.3" y="410.02" width="0.9" height="13.91" fill="#f3e6d2"/>
<rect x="489.7" y="410.02" width="4.9" height="13.91" fill="#fbe6d0"/>
<rect x="488.3" y="424.73" width="0.9" height="13.91" fill="#f3e6d2"/>
<rect x="489.7" y="424.73" width="4.9" height="13.91" fill="#fbe6d0"/>
<rect x="497.2" y="145.24" width="2.6" height="13.91" fill="#d0eaf9"/>
<rect x="500.6" y="145.24" width="2.4" height="13.91" fill="#bfd2e4"/>
<rect x="499.8" y="159.95" width="1.7" height="13.91" fill="#d0eaf9"/>
<rect x="499.4" y="174.66" width="1.2" height="13.91" fill="#a9c3dc"/>
<rect x="499.4" y="189.37" width="1.2" height="13.91" fill="#a9c3dc"/>
<rect x="499.4" y="204.08" width="1.2" height="13.91" fill="#a9c3dc"/>
<rect x="497.2" y="130.53" width="327.2" height="13.91" fill="#d0eaf9"/>
<rect x="503.6" y="145.24" width="317.8" height="13.91" fill="#e5d6f2"/>
<rect x="822.2" y="145.24" width="1.8" height="13.91" fill="#d0eaf9"/>
<rect x="503.6" y="159.95" width="207.2" height="13.91" fill="#e5d6f2"/>
<rect x="711.5" y="159.95" width="109.9" height="13.91" fill="#cdf8e8"/>
<rect x="503.6" y="174.66" width="19.4" height="13.91" fill="#cdf8e8"/>
<rect x="505.3" y="174.66" width="0.55" height="13.91" fill="#86a3ad"/>
<rect x="507.3" y="174.66" width="0.55" height="13.91" fill="#86a3ad"/>
<rect x="509.2" y="174.66" width="0.55" height="13.91" fill="#86a3ad"/>
<rect x="512.3" y="174.66" width="0.55" height="13.91" fill="#86a3ad"/>
<rect x="523.8" y="174.66" width="187" height="13.91" fill="#cdf8e8"/>
<rect x="712" y="174.66" width="7" height="13.91" fill="#cdf8e8"/>
<rect x="719.8" y="174.66" width="101.6" height="13.91" fill="#cdf8e8"/>
<rect x="503.6" y="189.37" width="2.2" height="13.91" fill="#cdf8e8"/>
<rect x="506.6" y="189.37" width="0.6" height="13.91" fill="#b5a56a"/>
<rect x="508" y="189.37" width="12.8" height="13.91" fill="#cdf8e8"/>
<rect x="521.6" y="189.37" width="1.4" height="13.91" fill="#bedcd8"/>
<rect x="523.8" y="189.37" width="187" height="13.91" fill="#cdf8e8"/>
<rect x="712" y="189.37" width="7" height="13.91" fill="#cdf8e8"/>
<rect x="719.8" y="189.37" width="1" height="13.91" fill="#c4e6dd"/>
<rect x="721.5" y="189.37" width="77.8" height="13.91" fill="#cdf8e8"/>
<rect x="800" y="189.37" width="14.4" height="13.91" fill="#cdf8e8"/>
<rect x="815" y="189.37" width="1.2" height="13.91" fill="#bedcd8"/>
<rect x="817" y="189.37" width="4.4" height="13.91" fill="#cdf8e8"/>
<rect x="503.6" y="204.08" width="2.2" height="13.91" fill="#cdf8e8"/>
<rect x="506.6" y="204.08" width="0.6" height="13.91" fill="#b5a56a"/>
<rect x="508" y="204.08" width="9.2" height="13.91" fill="#cdf8e8"/>
<rect x="518" y="204.08" width="2.2" height="13.91" fill="#d0eaf9"/>
<rect x="521" y="204.08" width="1.7" height="13.91" fill="#fcd95b"/>
<rect x="523.8" y="204.08" width="187" height="13.91" fill="#cdf8e8"/>
<rect x="712" y="204.08" width="7" height="13.91" fill="#cdf8e8"/>
<rect x="719.8" y="204.08" width="1" height="13.91" fill="#c4e6dd"/>
<rect x="721.5" y="204.08" width="77.8" height="13.91" fill="#cdf8e8"/>
<rect x="800" y="204.08" width="14.4" height="13.91" fill="#cdf8e8"/>
<rect x="815" y="204.08" width="1.2" height="13.91" fill="#e5d6f2"/>
<rect x="817" y="204.08" width="4.4" height="13.91" fill="#cdf8e8"/>
<rect x="822.2" y="204.08" width="1.6" height="13.91" fill="#fcd95b"/>
<rect x="503.6" y="218.79" width="2.8" height="13.91" fill="#cdf8e8"/>
<rect x="508" y="218.79" width="7.5" height="13.91" fill="#cdf8e8"/>
<rect x="516.3" y="218.79" width="0.7" height="13.91" fill="#bedcd8"/>
<rect x="517.8" y="218.79" width="1.2" height="13.91" fill="#bedcd8"/>
<rect x="519.8" y="218.79" width="1.4" height="13.91" fill="#fcd95b"/>
<rect x="522" y="218.79" width="1" height="13.91" fill="#cdf8e8"/>
<rect x="523.8" y="218.79" width="187" height="13.91" fill="#cdf8e8"/>
<rect x="712" y="218.79" width="7" height="13.91" fill="#cdf8e8"/>
<rect x="719.8" y="218.79" width="1" height="13.91" fill="#c4e6dd"/>
<rect x="721.5" y="218.79" width="77.8" height="13.91" fill="#cdf8e8"/>
<rect x="800" y="218.79" width="14.4" height="13.91" fill="#cdf8e8"/>
<rect x="815" y="218.79" width="6.4" height="13.91" fill="#cdf8e8"/>
<rect x="503.6" y="233.5" width="2.8" height="13.91" fill="#cdf8e8"/>
<rect x="508" y="233.5" width="6.6" height="13.91" fill="#cdf8e8"/>
<rect x="515.4" y="233.5" width="1.4" height="13.91" fill="#fbe6d0"/>
<rect x="521" y="233.5" width="1.7" height="13.91" fill="#b9ab68"/>
<rect x="523.8" y="233.5" width="187" height="13.91" fill="#cdf8e8"/>
<rect x="712" y="233.5" width="7" height="13.91" fill="#cdf8e8"/>
<rect x="719.8" y="233.5" width="1" height="13.91" fill="#e5d6f2"/>
<rect x="721.5" y="233.5" width="77.8" height="13.91" fill="#cdf8e8"/>
<rect x="800" y="233.5" width="15.3" height="13.91" fill="#cdf8e8"/>
<rect x="816" y="233.5" width="0.9" height="13.91" fill="#bedcd8"/>
<rect x="817.4" y="233.5" width="1" height="13.91" fill="#bedcd8"/>
<rect x="819" y="233.5" width="2.4" height="13.91" fill="#cdf8e8"/>
<rect x="503.6" y="248.21" width="2.4" height="13.91" fill="#cdf8e8"/>
<rect x="508" y="248.21" width="7.5" height="13.91" fill="#cdf8e8"/>
<rect x="516.3" y="248.21" width="1.3" height="13.91" fill="#bedcd8"/>
<rect x="523.2" y="248.21" width="4.4" height="13.91" fill="#cdf8e8"/>
<rect x="528.4" y="248.21" width="2.8" height="13.91" fill="#cdf8e8"/>
<rect x="532" y="248.21" width="178.8" height="13.91" fill="#cdf8e8"/>
<rect x="712" y="248.21" width="7" height="13.91" fill="#cdf8e8"/>
<rect x="719.8" y="248.21" width="1" height="13.91" fill="#e5d6f2"/>
<rect x="721.5" y="248.21" width="81.8" height="13.91" fill="#cdf8e8"/>
<rect x="804.5" y="248.21" width="2.1" height="13.91" fill="#cdf8e8"/>
<rect x="807.5" y="248.21" width="13.9" height="13.91" fill="#cdf8e8"/>
<rect x="503.6" y="262.92" width="2.2" height="13.91" fill="#cdf8e8"/>
<rect x="507.4" y="262.92" width="6.8" height="13.91" fill="#cdf8e8"/>
<rect x="525.2" y="262.92" width="2.5" height="13.91" fill="#cdf8e8"/>
<rect x="528.5" y="262.92" width="2.4" height="13.91" fill="#d795f6"/>
<rect x="531.7" y="262.92" width="8.7" height="13.91" fill="#cdf8e8"/>
<rect x="541.2" y="262.92" width="1.8" height="13.91" fill="#cdf8e8"/>
<rect x="543.8" y="262.92" width="2.4" height="13.91" fill="#cdf8e8"/>
<rect x="547" y="262.92" width="161.4" height="13.91" fill="#cdf8e8"/>
<rect x="709.2" y="262.92" width="1.8" height="13.91" fill="#cdf8e8"/>
<rect x="715" y="262.92" width="3.4" height="13.91" fill="#d795f6"/>
<rect x="721.5" y="262.92" width="3.5" height="13.91" fill="#cdf8e8"/>
<rect x="725.9" y="262.92" width="67.1" height="13.91" fill="#cdf8e8"/>
<rect x="793.6" y="262.92" width="2.6" height="13.91" fill="#cdf8e8"/>
<rect x="797" y="262.92" width="6.2" height="13.91" fill="#cdf8e8"/>
<rect x="804" y="262.92" width="2.7" height="13.91" fill="#cdf8e8"/>
<rect x="807.5" y="262.92" width="7" height="13.91" fill="#d0eaf9"/>
<rect x="815.3" y="262.92" width="6.1" height="13.91" fill="#cdf8e8"/>
<rect x="503.6" y="277.63" width="2.2" height="13.91" fill="#cdf8e8"/>
<rect x="507.4" y="277.63" width="4.8" height="13.91" fill="#cdf8e8"/>
<rect x="513" y="277.63" width="1.8" height="13.91" fill="#fcd95b"/>
<rect x="525.2" y="277.63" width="2.5" height="13.91" fill="#cdf8e8"/>
<rect x="531.7" y="277.63" width="3" height="13.91" fill="#cdf8e8"/>
<rect x="535.5" y="277.63" width="4.9" height="13.91" fill="#cdf8e8"/>
<rect x="541.2" y="277.63" width="6.2" height="13.91" fill="#cdf8e8"/>
<rect x="548.2" y="277.63" width="5.6" height="13.91" fill="#cdf8e8"/>
<rect x="554.6" y="277.63" width="2.3" height="13.91" fill="#bedcd8"/>
<rect x="557.7" y="277.63" width="104.2" height="13.91" fill="#cdf8e8"/>
<rect x="663.6" y="277.63" width="25.2" height="13.91" fill="#cdf8e8"/>
<rect x="689.7" y="277.63" width="1.7" height="13.91" fill="#bedcd8"/>
<rect x="692.3" y="277.63" width="16.1" height="13.91" fill="#cdf8e8"/>
<rect x="709.2" y="277.63" width="1.8" height="13.91" fill="#cdf8e8"/>
<rect x="721.5" y="277.63" width="3.5" height="13.91" fill="#cdf8e8"/>
<rect x="725.9" y="277.63" width="67.1" height="13.91" fill="#cdf8e8"/>
<rect x="793.6" y="277.63" width="2.4" height="13.91" fill="#cdf8e8"/>
<rect x="797" y="277.63" width="5.2" height="13.91" fill="#cdf8e8"/>
<rect x="803" y="277.63" width="1.6" height="13.91" fill="#fbe6d0"/>
<rect x="805.3" y="277.63" width="1.5" height="13.91" fill="#cdf8e8"/>
<rect x="807.5" y="277.63" width="6.9" height="13.91" fill="#fcd95b"/>
<rect x="815.3" y="277.63" width="6.1" height="13.91" fill="#cdf8e8"/>
<rect x="503.6" y="292.34" width="2.2" height="13.91" fill="#cdf8e8"/>
<rect x="507.4" y="292.34" width="4.8" height="13.91" fill="#cdf8e8"/>
<rect x="513" y="292.34" width="1.8" height="13.91" fill="#bedcd8"/>
<rect x="525.2" y="292.34" width="2.5" height="13.91" fill="#cdf8e8"/>
<rect x="531.7" y="292.34" width="3" height="13.91" fill="#cdf8e8"/>
<rect x="535.5" y="292.34" width="4.9" height="13.91" fill="#cdf8e8"/>
<rect x="541.2" y="292.34" width="6.2" height="13.91" fill="#cdf8e8"/>
<rect x="548.2" y="292.34" width="5.6" height="13.91" fill="#cdf8e8"/>
<rect x="554.6" y="292.34" width="2.3" height="13.91" fill="#bedcd8"/>
<rect x="557.7" y="292.34" width="104.2" height="13.91" fill="#cdf8e8"/>
<rect x="663.6" y="292.34" width="25.2" height="13.91" fill="#cdf8e8"/>
<rect x="689.7" y="292.34" width="1.7" height="13.91" fill="#bedcd8"/>
<rect x="692.3" y="292.34" width="16.1" height="13.91" fill="#cdf8e8"/>
<rect x="709.2" y="292.34" width="1.8" height="13.91" fill="#cdf8e8"/>
<rect x="721.5" y="292.34" width="3.5" height="13.91" fill="#cdf8e8"/>
<rect x="725.9" y="292.34" width="67.1" height="13.91" fill="#cdf8e8"/>
<rect x="793.6" y="292.34" width="2.4" height="13.91" fill="#cdf8e8"/>
<rect x="797" y="292.34" width="5.2" height="13.91" fill="#cdf8e8"/>
<rect x="803" y="292.34" width="1.6" height="13.91" fill="#cdf8e8"/>
<rect x="805.3" y="292.34" width="1.5" height="13.91" fill="#cdf8e8"/>
<rect x="807.5" y="292.34" width="6.9" height="13.91" fill="#d795f6"/>
<rect x="815.3" y="292.34" width="3.9" height="13.91" fill="#cdf8e8"/>
<rect x="820" y="292.34" width="1.4" height="13.91" fill="#fcd95b"/>
<rect x="503.6" y="307.05" width="2.2" height="13.91" fill="#cdf8e8"/>
<rect x="507.4" y="307.05" width="5.2" height="13.91" fill="#cdf8e8"/>
<rect x="525.2" y="307.05" width="2.5" height="13.91" fill="#cdf8e8"/>
<rect x="533.4" y="307.05" width="1.2" height="13.91" fill="#d795f6"/>
<rect x="535.4" y="307.05" width="13.7" height="13.91" fill="#cdf8e8"/>
<rect x="549.9" y="307.05" width="1.3" height="13.91" fill="#d795f6"/>
<rect x="555" y="307.05" width="1.9" height="13.91" fill="#cdf8e8"/>
<rect x="557.7" y="307.05" width="104.2" height="13.91" fill="#cdf8e8"/>
<rect x="665" y="307.05" width="24.6" height="13.91" fill="#cdf8e8"/>
<rect x="690.2" y="307.05" width="1" height="13.91" fill="#fcd95b"/>
<rect x="692.3" y="307.05" width="16.1" height="13.91" fill="#cdf8e8"/>
<rect x="712.2" y="307.05" width="1" height="13.91" fill="#fcd95b"/>
<rect x="721.7" y="307.05" width="2.9" height="13.91" fill="#fcd95b"/>
<rect x="725.9" y="307.05" width="67.1" height="13.91" fill="#cdf8e8"/>
<rect x="793.6" y="307.05" width="2.6" height="13.91" fill="#cdf8e8"/>
<rect x="797" y="307.05" width="5.2" height="13.91" fill="#cdf8e8"/>
<rect x="803" y="307.05" width="3.7" height="13.91" fill="#cdf8e8"/>
<rect x="807.5" y="307.05" width="1.7" height="13.91" fill="#fcd95b"/>
<rect x="810" y="307.05" width="4.5" height="13.91" fill="#cdf8e8"/>
<rect x="815.3" y="307.05" width="6.1" height="13.91" fill="#cdf8e8"/>
<rect x="503.6" y="321.76" width="2.4" height="13.91" fill="#cdf8e8"/>
<rect x="503.6" y="336.47" width="2.4" height="13.91" fill="#cdf8e8"/>
<rect x="503.6" y="351.18" width="2.4" height="13.91" fill="#cdf8e8"/>
<rect x="503.6" y="365.89" width="2.4" height="13.91" fill="#cdf8e8"/>
<rect x="503.6" y="380.6" width="2.4" height="13.91" fill="#cdf8e8"/>
<rect x="507.9" y="321.76" width="4.9" height="13.91" fill="#c6f3e6"/>
<rect x="507.9" y="336.47" width="4.9" height="13.91" fill="#c6f3e6"/>
<rect x="507.9" y="351.18" width="4.9" height="13.91" fill="#c6f3e6"/>
<rect x="507.9" y="365.89" width="4.9" height="13.91" fill="#c6f3e6"/>
<rect x="507.9" y="380.6" width="4.9" height="13.91" fill="#c6f3e6"/>
<rect x="507.9" y="395.31" width="4.9" height="13.91" fill="#c6f3e6"/>
<rect x="507.9" y="410.02" width="4.9" height="13.91" fill="#c6f3e6"/>
<rect x="507.9" y="424.73" width="4.9" height="13.91" fill="#c6f3e6"/>
<rect x="525.5" y="321.76" width="2.3" height="13.91" fill="#cdf8e8"/>
<rect x="525.5" y="336.47" width="2.3" height="13.91" fill="#cdf8e8"/>
<rect x="525.5" y="351.18" width="2.3" height="13.91" fill="#cdf8e8"/>
<rect x="527.2" y="365.89" width="0.9" height="13.91" fill="#cdf8e8"/>
<rect x="527.2" y="380.6" width="0.9" height="13.91" fill="#cdf8e8"/>
<rect x="535.4" y="321.76" width="3.5" height="13.91" fill="#cdf8e8"/>
<rect x="535.4" y="336.47" width="3.5" height="13.91" fill="#cdf8e8"/>
<rect x="535.4" y="351.18" width="3.5" height="13.91" fill="#cdf8e8"/>
<rect x="535.4" y="365.89" width="3.5" height="13.91" fill="#cdf8e8"/>
<rect x="535.4" y="380.6" width="3.5" height="13.91" fill="#cdf8e8"/>
<rect x="539.8" y="321.76" width="3.2" height="13.91" fill="#cdf8e8"/>
<rect x="543.8" y="321.76" width="5.5" height="13.91" fill="#cdf8e8"/>
<rect x="550.2" y="321.76" width="3.4" height="13.91" fill="#cdf8e8"/>
<rect x="554.4" y="321.76" width="1.8" height="13.91" fill="#cdf8e8"/>
<rect x="540.6" y="336.47" width="2.6" height="13.91" fill="#cdf8e8"/>
<rect x="544" y="336.47" width="2.3" height="13.91" fill="#cdf8e8"/>
<rect x="547.5" y="336.47" width="1.8" height="13.91" fill="#cdf8e8"/>
<rect x="544" y="351.18" width="2.3" height="13.91" fill="#cdf8e8"/>
<rect x="546.8" y="351.18" width="2" height="13.91" fill="#fcd95b"/>
<rect x="545" y="365.89" width="1.2" height="13.91" fill="#d795f6"/>
<rect x="546.8" y="365.89" width="1.2" height="13.91" fill="#d795f6"/>
<rect x="553.2" y="365.89" width="1" height="13.91" fill="#cdf8e8"/>
<rect x="553.2" y="380.6" width="1" height="13.91" fill="#cdf8e8"/>
<rect x="535.4" y="395.31" width="3.5" height="13.91" fill="#fcd95b"/>
<rect x="552.7" y="395.31" width="1.3" height="13.91" fill="#fcd95b"/>
<rect x="536.2" y="410.02" width="2.7" height="13.91" fill="#d795f6"/>
<rect x="552.4" y="410.02" width="1" height="13.91" fill="#e5d6f2"/>
<rect x="847.2" y="56.98" width="1.9" height="13.91" fill="#d0eaf9"/>
<rect x="849.9" y="56.98" width="2.7" height="13.91" fill="#d0eaf9"/>
<rect x="853.4" y="56.98" width="3.5" height="13.91" fill="#d0eaf9"/>
<rect x="857.7" y="56.98" width="14.8" height="13.91" fill="#d0eaf9"/>
<rect x="873.3" y="56.98" width="20" height="13.91" fill="#d0eaf9"/>
<rect x="847.2" y="71.69" width="1.9" height="13.91" fill="#d0eaf9"/>
<rect x="849.9" y="71.69" width="2.7" height="13.91" fill="#d0eaf9"/>
<rect x="853.4" y="71.69" width="3.5" height="13.91" fill="#d0eaf9"/>
<rect x="857.7" y="71.69" width="14.8" height="13.91" fill="#d0eaf9"/>
<rect x="873.3" y="71.69" width="20" height="13.91" fill="#d0eaf9"/>
<rect x="847.2" y="86.4" width="1.9" height="13.91" fill="#d0eaf9"/>
<rect x="849.9" y="86.4" width="2.7" height="13.91" fill="#d0eaf9"/>
<rect x="853.4" y="86.4" width="3.5" height="13.91" fill="#d0eaf9"/>
<rect x="857.7" y="86.4" width="14.8" height="13.91" fill="#d0eaf9"/>
<rect x="873.3" y="86.4" width="20" height="13.91" fill="#d0eaf9"/>
<rect x="825.2" y="101.11" width="21.2" height="13.91" fill="#d0eaf9"/>
<rect x="847.2" y="101.11" width="1.9" height="13.91" fill="#d0eaf9"/>
<rect x="849.9" y="101.11" width="2.7" height="13.91" fill="#d0eaf9"/>
<rect x="853.4" y="101.11" width="3.5" height="13.91" fill="#d0eaf9"/>
<rect x="857.7" y="101.11" width="12.2" height="13.91" fill="#d0eaf9"/>
<rect x="870.7" y="101.11" width="9.7" height="13.91" fill="#d0eaf9"/>
<rect x="881.2" y="101.11" width="7.8" height="13.91" fill="#d0eaf9"/>
<rect x="889.8" y="101.11" width="3.5" height="13.91" fill="#dbeef9"/>
<rect x="825.2" y="115.82" width="16.6" height="13.91" fill="#d0eaf9"/>
<rect x="845.2" y="115.82" width="3.9" height="13.91" fill="#d0eaf9"/>
<rect x="849.9" y="115.82" width="1.8" height="13.91" fill="#d0eaf9"/>
<rect x="852.5" y="115.82" width="4.4" height="13.91" fill="#d0eaf9"/>
<rect x="857.7" y="115.82" width="7.5" height="13.91" fill="#d0eaf9"/>
<rect x="866" y="115.82" width="0.8" height="13.91" fill="#e6f3d1"/>
<rect x="867.6" y="115.82" width="11.4" height="13.91" fill="#c8deee"/>
<rect x="879.8" y="115.82" width="0.35" height="13.91" fill="#f6f5d5"/>
<rect x="883" y="115.82" width="10.3" height="13.91" fill="#d0eaf9"/>
<rect x="825.2" y="130.53" width="2.2" height="13.91" fill="#d0eaf9"/>
<rect x="828.2" y="130.53" width="1.8" height="13.91" fill="#d0eaf9"/>
<rect x="830.8" y="130.53" width="1.8" height="13.91" fill="#d0eaf9"/>
<rect x="833.4" y="130.53" width="7.8" height="13.91" fill="#d0eaf9"/>
<rect x="845.2" y="130.53" width="3.9" height="13.91" fill="#d0eaf9"/>
<rect x="849.9" y="130.53" width="1.8" height="13.91" fill="#d0eaf9"/>
<rect x="852.5" y="130.53" width="4.4" height="13.91" fill="#d0eaf9"/>
<rect x="857.7" y="130.53" width="7.9" height="13.91" fill="#d0eaf9"/>
<rect x="866.4" y="130.53" width="1.3" height="13.91" fill="#f6f5d5"/>
<rect x="870.2" y="130.53" width="7.9" height="13.91" fill="#c4daeb"/>
<rect x="878.9" y="130.53" width="0.5" height="13.91" fill="#fcd95b"/>
<rect x="881.2" y="130.53" width="2.8" height="13.91" fill="#d0eaf9"/>
<rect x="884.8" y="130.53" width="4.2" height="13.91" fill="#d0eaf9"/>
<rect x="889.8" y="130.53" width="3.5" height="13.91" fill="#d0eaf9"/>
<rect x="822.2" y="145.24" width="2.6" height="13.91" fill="#d0eaf9"/>
<rect x="825.6" y="145.24" width="1.8" height="13.91" fill="#e5d6f2"/>
<rect x="828.2" y="145.24" width="3.5" height="13.91" fill="#d0eaf9"/>
<rect x="832.5" y="145.24" width="6.2" height="13.91" fill="#e5d6f2"/>
<rect x="839.5" y="145.24" width="2.3" height="13.91" fill="#d0eaf9"/>
<rect x="844.7" y="145.24" width="1.8" height="13.91" fill="#e5d6f2"/>
<rect x="847.3" y="145.24" width="1.8" height="13.91" fill="#d0eaf9"/>
<rect x="849.9" y="145.24" width="1.8" height="13.91" fill="#d0eaf9"/>
<rect x="852.5" y="145.24" width="4.4" height="13.91" fill="#d0eaf9"/>
<rect x="857.7" y="145.24" width="7.9" height="13.91" fill="#d0eaf9"/>
<rect x="866.4" y="145.24" width="1.3" height="13.91" fill="#f6f5d5"/>
<rect x="870.2" y="145.24" width="8.2" height="13.91" fill="#c4daeb"/>
<rect x="881.2" y="145.24" width="1.8" height="13.91" fill="#e5d6f2"/>
<rect x="883.8" y="145.24" width="2.6" height="13.91" fill="#d0eaf9"/>
<rect x="887.2" y="145.24" width="2.7" height="13.91" fill="#e5d6f2"/>
<rect x="890.7" y="145.24" width="2.9" height="13.91" fill="#d0eaf9"/>
<rect x="826.8" y="159.95" width="2.7" height="13.91" fill="#e5d6f2"/>
<rect x="830.3" y="159.95" width="3.9" height="13.91" fill="#d0eaf9"/>
<rect x="839.5" y="159.95" width="2.3" height="13.91" fill="#bfd2e4"/>
<rect x="847.3" y="159.95" width="1.8" height="13.91" fill="#d0eaf9"/>
<rect x="849.9" y="159.95" width="1.8" height="13.91" fill="#d0eaf9"/>
<rect x="852.5" y="159.95" width="4.4" height="13.91" fill="#d0eaf9"/>
<rect x="857.7" y="159.95" width="7.9" height="13.91" fill="#d0eaf9"/>
<rect x="866.4" y="159.95" width="1.3" height="13.91" fill="#f6f5d5"/>
<rect x="868.5" y="159.95" width="1.4" height="13.91" fill="#d0eaf9"/>
<rect x="870.7" y="159.95" width="1.9" height="13.91" fill="#fcd95b"/>
<rect x="873.4" y="159.95" width="5.2" height="13.91" fill="#d0eaf9"/>
<rect x="882.9" y="159.95" width="1.8" height="13.91" fill="#e5d6f2"/>
<rect x="885.5" y="159.95" width="3.5" height="13.91" fill="#d0eaf9"/>
<rect x="889.8" y="159.95" width="1" height="13.91" fill="#e5d6f2"/>
<rect x="891.6" y="159.95" width="2.2" height="13.91" fill="#d0eaf9"/>
<rect x="826.5" y="174.66" width="2.1" height="13.91" fill="#e5d6f2"/>
<rect x="839.5" y="174.66" width="0.7" height="13.91" fill="#d0eaf9"/>
<rect x="847.3" y="174.66" width="1.8" height="13.91" fill="#d0eaf9"/>
<rect x="849.9" y="174.66" width="1.8" height="13.91" fill="#d0eaf9"/>
<rect x="852.5" y="174.66" width="4.4" height="13.91" fill="#d0eaf9"/>
<rect x="857.7" y="174.66" width="7.9" height="13.91" fill="#d0eaf9"/>
<rect x="866.4" y="174.66" width="1.3" height="13.91" fill="#f6f5d5"/>
<rect x="871.6" y="174.66" width="7" height="13.91" fill="#d0eaf9"/>
<rect x="883.8" y="174.66" width="2.2" height="13.91" fill="#e5d6f2"/>
<rect x="890.7" y="174.66" width="3.1" height="13.91" fill="#d0eaf9"/>
<rect x="826.5" y="189.37" width="1.3" height="13.91" fill="#e5d6f2"/>
<rect x="830.3" y="189.37" width="1.4" height="13.91" fill="#e5d6f2"/>
<rect x="847.3" y="189.37" width="1.7" height="13.91" fill="#d0eaf9"/>
<rect x="849.9" y="189.37" width="1.7" height="13.91" fill="#d0eaf9"/>
<rect x="852.5" y="189.37" width="4.3" height="13.91" fill="#d0eaf9"/>
<rect x="857.7" y="189.37" width="7.8" height="13.91" fill="#d0eaf9"/>
<rect x="871.6" y="189.37" width="6.9" height="13.91" fill="#d0eaf9"/>
<rect x="866.4" y="189.37" width="1.4" height="13.91" fill="#f6f5d5"/>
<rect x="847.3" y="204.08" width="1.7" height="13.91" fill="#d0eaf9"/>
<rect x="849.9" y="204.08" width="1.7" height="13.91" fill="#d0eaf9"/>
<rect x="852.5" y="204.08" width="4.3" height="13.91" fill="#d0eaf9"/>
<rect x="857.7" y="204.08" width="7.8" height="13.91" fill="#d0eaf9"/>
<rect x="871.6" y="204.08" width="6.9" height="13.91" fill="#d0eaf9"/>
<rect x="866.4" y="204.08" width="1.4" height="13.91" fill="#f6f5d5"/>
<rect x="847.3" y="218.79" width="1.7" height="13.91" fill="#d0eaf9"/>
<rect x="849.9" y="218.79" width="1.7" height="13.91" fill="#d0eaf9"/>
<rect x="852.5" y="218.79" width="4.3" height="13.91" fill="#d0eaf9"/>
<rect x="857.7" y="218.79" width="7.8" height="13.91" fill="#d0eaf9"/>
<rect x="871.6" y="218.79" width="6.9" height="13.91" fill="#d0eaf9"/>
<rect x="866.4" y="218.79" width="1.4" height="13.91" fill="#f6f5d5"/>
<rect x="847.3" y="233.5" width="1.7" height="13.91" fill="#d0eaf9"/>
<rect x="849.9" y="233.5" width="1.7" height="13.91" fill="#d0eaf9"/>
<rect x="852.5" y="233.5" width="4.3" height="13.91" fill="#d0eaf9"/>
<rect x="857.7" y="233.5" width="7.8" height="13.91" fill="#d0eaf9"/>
<rect x="871.6" y="233.5" width="6.9" height="13.91" fill="#d0eaf9"/>
<rect x="866.4" y="233.5" width="1.4" height="13.91" fill="#f6f5d5"/>
<rect x="847.3" y="248.21" width="1.7" height="13.91" fill="#d0eaf9"/>
<rect x="849.9" y="248.21" width="1.7" height="13.91" fill="#d0eaf9"/>
<rect x="852.5" y="248.21" width="4.3" height="13.91" fill="#d0eaf9"/>
<rect x="857.7" y="248.21" width="7.8" height="13.91" fill="#d0eaf9"/>
<rect x="871.6" y="248.21" width="6.9" height="13.91" fill="#d0eaf9"/>
<rect x="866.4" y="248.21" width="1.4" height="13.91" fill="#f6f5d5"/>
<rect x="847.3" y="262.92" width="1.7" height="13.91" fill="#d0eaf9"/>
<rect x="849.9" y="262.92" width="1.7" height="13.91" fill="#d0eaf9"/>
<rect x="852.5" y="262.92" width="4.3" height="13.91" fill="#d0eaf9"/>
<rect x="857.7" y="262.92" width="7.8" height="13.91" fill="#d6d6f6"/>
<rect x="871.6" y="262.92" width="1" height="13.91" fill="#d0eaf9"/>
<rect x="873.3" y="262.92" width="5.2" height="13.91" fill="#d6d6f6"/>
<rect x="866.4" y="262.92" width="1.4" height="13.91" fill="#f6f5d5"/>
<rect x="847.3" y="277.63" width="1.7" height="13.91" fill="#d0eaf9"/>
<rect x="849.9" y="277.63" width="1.7" height="13.91" fill="#d0eaf9"/>
<rect x="852.5" y="277.63" width="4.3" height="13.91" fill="#d0eaf9"/>
<rect x="857.7" y="277.63" width="7.8" height="13.91" fill="#d6d6f6"/>
<rect x="871.6" y="277.63" width="1" height="13.91" fill="#d0eaf9"/>
<rect x="873.3" y="277.63" width="5.2" height="13.91" fill="#d6d6f6"/>
<rect x="866.4" y="277.63" width="1.4" height="13.91" fill="#f6f5d5"/>
<rect x="847.3" y="292.34" width="1.7" height="13.91" fill="#d0eaf9"/>
<rect x="849.9" y="292.34" width="1.7" height="13.91" fill="#d0eaf9"/>
<rect x="852.5" y="292.34" width="4.3" height="13.91" fill="#d0eaf9"/>
<rect x="857.7" y="292.34" width="5.3" height="13.91" fill="#ecf5cd"/>
<rect x="863.8" y="292.34" width="1.7" height="13.91" fill="#ecf5cd"/>
<rect x="871.6" y="292.34" width="1" height="13.91" fill="#d0eaf9"/>
<rect x="873.3" y="292.34" width="5.2" height="13.91" fill="#ecf5cd"/>
<rect x="866.4" y="292.34" width="1.4" height="13.91" fill="#f6f5d5"/>
<rect x="847.3" y="307.05" width="1.7" height="13.91" fill="#d0eaf9"/>
<rect x="849.9" y="307.05" width="1.7" height="13.91" fill="#d0eaf9"/>
<rect x="852.5" y="307.05" width="4.3" height="13.91" fill="#d0eaf9"/>
<rect x="857.7" y="307.05" width="5.3" height="13.91" fill="#ecf5cd"/>
<rect x="863.8" y="307.05" width="1.7" height="13.91" fill="#ecf5cd"/>
<rect x="871.6" y="307.05" width="1" height="13.91" fill="#d0eaf9"/>
<rect x="873.3" y="307.05" width="5.2" height="13.91" fill="#ecf5cd"/>
<rect x="866.4" y="307.05" width="1.4" height="13.91" fill="#f6f5d5"/>
<rect x="883.8" y="189.37" width="2.6" height="13.91" fill="#e5d6f2"/>
<rect x="883.8" y="204.08" width="2.6" height="13.91" fill="#e5d6f2"/>
<rect x="883.8" y="218.79" width="2.6" height="13.91" fill="#e5d6f2"/>
<rect x="889.8" y="233.5" width="2.6" height="13.91" fill="#b8d6d3"/>
<rect x="889.8" y="248.21" width="2.6" height="13.91" fill="#b8d6d3"/>
<rect x="889.8" y="262.92" width="2.6" height="13.91" fill="#b8d6d3"/>
<rect x="889.8" y="277.63" width="2.6" height="13.91" fill="#b8d6d3"/>
<rect x="889.8" y="292.34" width="2.6" height="13.91" fill="#b8d6d3"/>
<rect x="889.8" y="307.05" width="2.6" height="13.91" fill="#b8d6d3"/>
<rect x="894.3" y="42.27" width="117" height="13.91" fill="#cdf8e8"/>
<rect x="894.3" y="56.98" width="117" height="13.91" fill="#cdf8e8"/>
<rect x="894.3" y="71.69" width="117" height="13.91" fill="#cdf8e8"/>
<rect x="894.3" y="86.4" width="117" height="13.91" fill="#cdf8e8"/>
<rect x="894.3" y="101.11" width="117" height="13.91" fill="#cdf8e8"/>
<rect x="894.3" y="115.82" width="117" height="13.91" fill="#cdf8e8"/>
<rect x="894.3" y="130.53" width="117" height="13.91" fill="#cdf8e8"/>
<rect x="894.3" y="145.24" width="117" height="13.91" fill="#cdf8e8"/>
<rect x="894.3" y="159.95" width="117" height="13.91" fill="#cdf8e8"/>
<rect x="894.3" y="174.66" width="117" height="13.91" fill="#cdf8e8"/>
<rect x="894.3" y="189.37" width="117" height="13.91" fill="#cdf8e8"/>
<rect x="894.3" y="204.08" width="117" height="13.91" fill="#cdf8e8"/>
<rect x="894.3" y="218.79" width="117" height="13.91" fill="#cdf8e8"/>
<rect x="894.3" y="233.5" width="117" height="13.91" fill="#cdf8e8"/>
<rect x="894.3" y="248.21" width="117" height="13.91" fill="#cdf8e8"/>
<rect x="894.3" y="262.92" width="117" height="13.91" fill="#cdf8e8"/>
<rect x="894.5" y="277.63" width="1.8" height="13.91" fill="#e5d6f2"/>
<rect x="897.3" y="277.63" width="114" height="13.91" fill="#cdf8e8"/>
<rect x="894.5" y="292.34" width="1.8" height="13.91" fill="#e5d6f2"/>
<rect x="897.3" y="292.34" width="114" height="13.91" fill="#cdf8e8"/>
<rect x="894.5" y="307.05" width="1.8" height="13.91" fill="#e5d6f2"/>
<rect x="897.3" y="307.05" width="114" height="13.91" fill="#cdf8e8"/>
<rect x="1013" y="42.27" width="1.8" height="13.91" fill="#d0eaf9"/>
<rect x="1015.6" y="42.27" width="126.4" height="13.91" fill="#f6f5d5"/>
<rect x="1142.7" y="42.27" width="18.3" height="13.91" fill="#e6f3d1"/>
<rect x="1161.8" y="42.27" width="12.7" height="13.91" fill="#e5d6f2"/>
<rect x="1175.3" y="42.27" width="1.7" height="13.91" fill="#d0eaf9"/>
<rect x="1013" y="56.98" width="1.8" height="13.91" fill="#d0eaf9"/>
<rect x="1015.6" y="56.98" width="126.4" height="13.91" fill="#f6f5d5"/>
<rect x="1142.7" y="56.98" width="18.3" height="13.91" fill="#e6f3d1"/>
<rect x="1161.8" y="56.98" width="12.7" height="13.91" fill="#e5d6f2"/>
<rect x="1175.3" y="56.98" width="1.7" height="13.91" fill="#d0eaf9"/>
<rect x="1012.2" y="71.69" width="1.2" height="13.91" fill="#fcd95b"/>
<rect x="1013.9" y="71.69" width="1.1" height="13.91" fill="#d0eaf9"/>
<rect x="1015.6" y="71.69" width="126.4" height="13.91" fill="#f6f5d5"/>
<rect x="1142.7" y="71.69" width="18.3" height="13.91" fill="#e6f3d1"/>
<rect x="1161.8" y="71.69" width="12.7" height="13.91" fill="#e5d6f2"/>
<rect x="1175.3" y="71.69" width="1.7" height="13.91" fill="#d0eaf9"/>
<rect x="1012.2" y="86.4" width="3" height="13.91" fill="#fcd95b"/>
<rect x="1015.6" y="86.4" width="126.4" height="13.91" fill="#f6f5d5"/>
<rect x="1013.5" y="101.11" width="1.7" height="13.91" fill="#fcd95b"/>
<rect x="1015.6" y="101.11" width="126.4" height="13.91" fill="#f6f5d5"/>
<rect x="1015.6" y="115.82" width="120.7" height="13.91" fill="#fcd95b"/>
<rect x="1142.7" y="86.4" width="1.78" height="13.91" fill="#fcd95b"/>
<rect x="1144.9" y="86.4" width="1.29" height="13.91" fill="#f0d778"/>
<rect x="1146.52" y="86.4" width="2.25" height="13.91" fill="#f0d778"/>
<rect x="1149.13" y="86.4" width="1.35" height="13.91" fill="#e8c85a"/>
<rect x="1150.81" y="86.4" width="1.36" height="13.91" fill="#e8c85a"/>
<rect x="1152.49" y="86.4" width="2.22" height="13.91" fill="#fcd95b"/>
<rect x="1155.19" y="86.4" width="2.25" height="13.91" fill="#fcd95b"/>
<rect x="1157.92" y="86.4" width="1.91" height="13.91" fill="#fcd95b"/>
<rect x="1160.14" y="86.4" width="0.86" height="13.91" fill="#fcd95b"/>
<rect x="1142.7" y="101.11" width="1.56" height="13.91" fill="#c9b56a"/>
<rect x="1144.65" y="101.11" width="1.94" height="13.91" fill="#b9ab68"/>
<rect x="1146.92" y="101.11" width="1.6" height="13.91" fill="#b9ab68"/>
<rect x="1148.93" y="101.11" width="1.57" height="13.91" fill="#fcd95b"/>
<rect x="1150.97" y="101.11" width="1.67" height="13.91" fill="#fcd95b"/>
<rect x="1153.14" y="101.11" width="1.4" height="13.91" fill="#d9c066"/>
<rect x="1154.98" y="101.11" width="2.09" height="13.91" fill="#d9c066"/>
<rect x="1157.46" y="101.11" width="1.91" height="13.91" fill="#b9ab68"/>
<rect x="1159.7" y="101.11" width="0.3" height="13.91" fill="#fcd95b"/>
<rect x="1137" y="115.82" width="1.5" height="13.91" fill="#d9c066"/>
<rect x="1139.05" y="115.82" width="0.78" height="13.91" fill="#fcd95b"/>
<rect x="1140.29" y="115.82" width="1.53" height="13.91" fill="#b9ab68"/>
<rect x="1142.5" y="115.82" width="1.16" height="13.91" fill="#fcd95b"/>
<rect x="1144.27" y="115.82" width="1.33" height="13.91" fill="#d9c066"/>
<rect x="1146.04" y="115.82" width="1.09" height="13.91" fill="#8f8d6e"/>
<rect x="1147.65" y="115.82" width="1.2" height="13.91" fill="#fcd95b"/>
<rect x="1149.53" y="115.82" width="1.22" height="13.91" fill="#fcd95b"/>
<rect x="1151.08" y="115.82" width="1.47" height="13.91" fill="#fcd95b"/>
<rect x="1153.25" y="115.82" width="1.6" height="13.91" fill="#d9c066"/>
<rect x="1155.44" y="115.82" width="1.68" height="13.91" fill="#d9c066"/>
<rect x="1157.42" y="115.82" width="1.21" height="13.91" fill="#b9ab68"/>
<rect x="1159.18" y="115.82" width="1.24" height="13.91" fill="#b9ab68"/>
<rect x="1017.4" y="130.53" width="0.83" height="13.91" fill="#bfd2e4"/>
<rect x="1018.93" y="130.53" width="1.62" height="13.91" fill="#8f9aa8"/>
<rect x="1022.87" y="130.53" width="0.84" height="13.91" fill="#a9a48a"/>
<rect x="1024.64" y="130.53" width="0.98" height="13.91" fill="#a9a48a"/>
<rect x="1026.61" y="130.53" width="1.38" height="13.91" fill="#a9a48a"/>
<rect x="1028.98" y="130.53" width="0.85" height="13.91" fill="#7f9fd0"/>
<rect x="1030.4" y="130.53" width="1.36" height="13.91" fill="#f6f5d5"/>
<rect x="1032.5" y="130.53" width="1.29" height="13.91" fill="#c9c3a0"/>
<rect x="1035.96" y="130.53" width="1.27" height="13.91" fill="#7f9fd0"/>
<rect x="1038.08" y="130.53" width="1.22" height="13.91" fill="#b9ab68"/>
<rect x="1040.12" y="130.53" width="1.44" height="13.91" fill="#8f9aa8"/>
<rect x="1044.68" y="130.53" width="1.1" height="13.91" fill="#b9ab68"/>
<rect x="1046.52" y="130.53" width="1.1" height="13.91" fill="#bfd2e4"/>
<rect x="1048.16" y="130.53" width="0.91" height="13.91" fill="#7f9fd0"/>
<rect x="1049.62" y="130.53" width="1.3" height="13.91" fill="#b9ab68"/>
<rect x="1051.42" y="130.53" width="0.85" height="13.91" fill="#b9ab68"/>
<rect x="1053.25" y="130.53" width="1.31" height="13.91" fill="#b9ab68"/>
<rect x="1055.5" y="130.53" width="1.31" height="13.91" fill="#7f9fd0"/>
<rect x="1057.63" y="130.53" width="1.66" height="13.91" fill="#b9ab68"/>
<rect x="1059.97" y="130.53" width="0.82" height="13.91" fill="#8f9aa8"/>
<rect x="1061.79" y="130.53" width="1.17" height="13.91" fill="#8f9aa8"/>
<rect x="1063.61" y="130.53" width="0.84" height="13.91" fill="#8fa9cf"/>
<rect x="1065.32" y="130.53" width="1.18" height="13.91" fill="#7f9fd0"/>
<rect x="1068.85" y="130.53" width="1.39" height="13.91" fill="#f6f5d5"/>
<rect x="1071.12" y="130.53" width="1" height="13.91" fill="#b9ab68"/>
<rect x="1072.96" y="130.53" width="0.96" height="13.91" fill="#8fa9cf"/>
<rect x="1074.88" y="130.53" width="1.06" height="13.91" fill="#bfd2e4"/>
<rect x="1076.7" y="130.53" width="1.48" height="13.91" fill="#8fa9cf"/>
<rect x="1079" y="130.53" width="1.31" height="13.91" fill="#bfd2e4"/>
<rect x="1081.21" y="130.53" width="1.52" height="13.91" fill="#bfd2e4"/>
<rect x="1083.33" y="130.53" width="1.19" height="13.91" fill="#f6f5d5"/>
<rect x="1085.52" y="130.53" width="1.49" height="13.91" fill="#8f9aa8"/>
<rect x="1087.64" y="130.53" width="1.36" height="13.91" fill="#8fa9cf"/>
<rect x="1162" y="86.4" width="6" height="13.91" fill="#cdf8e8"/>
<rect x="1171" y="86.4" width="1.7" height="13.91" fill="#e5d6f2"/>
<rect x="1173.6" y="86.4" width="1.7" height="13.91" fill="#d0eaf9"/>
<rect x="1162" y="101.11" width="6.4" height="13.91" fill="#e5d6f2"/>
<rect x="1170" y="101.11" width="2" height="13.91" fill="#e5d6f2"/>
<rect x="1175.3" y="101.11" width="1.7" height="13.91" fill="#d0eaf9"/>
<rect x="1162" y="115.82" width="6.4" height="13.91" fill="#e5d6f2"/>
<rect x="1169.8" y="115.82" width="1.7" height="13.91" fill="#fcd95b"/>
<rect x="1175.3" y="115.82" width="1.7" height="13.91" fill="#d0eaf9"/>
<rect x="1089.4" y="130.53" width="3.2" height="13.91" fill="#f6f5d5"/>
<rect x="1096.4" y="130.53" width="2.6" height="13.91" fill="#f6f5d5"/>
<rect x="1099.8" y="130.53" width="1.4" height="13.91" fill="#f6f5d5"/>
<rect x="1102" y="130.53" width="9" height="13.91" fill="#f6f5d5"/>
<rect x="1113.7" y="130.53" width="22.6" height="13.91" fill="#f6f5d5"/>
<rect x="1138" y="130.53" width="4.7" height="13.91" fill="#a9a582"/>
<rect x="1162" y="130.53" width="6.4" height="13.91" fill="#e5d6f2"/>
<rect x="1173.6" y="130.53" width="1.4" height="13.91" fill="#fcd95b"/>
<rect x="1175.7" y="130.53" width="1.3" height="13.91" fill="#d0eaf9"/>
<rect x="1091" y="145.24" width="2" height="13.91" fill="#f6f5d5"/>
<rect x="1096.4" y="145.24" width="2.6" height="13.91" fill="#f6f5d5"/>
<rect x="1099.8" y="145.24" width="1.4" height="13.91" fill="#f6f5d5"/>
<rect x="1104.2" y="145.24" width="3.1" height="13.91" fill="#f6f5d5"/>
<rect x="1108.5" y="145.24" width="2.5" height="13.91" fill="#f6f5d5"/>
<rect x="1113.7" y="145.24" width="22.6" height="13.91" fill="#f6f5d5"/>
<rect x="1162.3" y="145.24" width="4.4" height="13.91" fill="#e5d6f2"/>
<rect x="1175.7" y="145.24" width="1.3" height="13.91" fill="#d0eaf9"/>
<rect x="1091" y="159.95" width="2" height="13.91" fill="#f6f5d5"/>
<rect x="1096.4" y="159.95" width="2.6" height="13.91" fill="#f6f5d5"/>
<rect x="1099.8" y="159.95" width="1.4" height="13.91" fill="#f6f5d5"/>
<rect x="1117.2" y="159.95" width="1.8" height="13.91" fill="#f6f5d5"/>
<rect x="1119.8" y="159.95" width="15.6" height="13.91" fill="#f6f5d5"/>
<rect x="1162.3" y="159.95" width="4.4" height="13.91" fill="#e5d6f2"/>
<rect x="1175.7" y="159.95" width="1.3" height="13.91" fill="#d0eaf9"/>
<rect x="1091" y="174.66" width="2" height="13.91" fill="#f6f5d5"/>
<rect x="1096.4" y="174.66" width="2.6" height="13.91" fill="#f6f5d5"/>
<rect x="1099.8" y="174.66" width="1.4" height="13.91" fill="#f6f5d5"/>
<rect x="1117.2" y="174.66" width="1.8" height="13.91" fill="#fcd95b"/>
<rect x="1119.8" y="174.66" width="15.6" height="13.91" fill="#f6f5d5"/>
<rect x="1091" y="189.37" width="2" height="13.91" fill="#f6f5d5"/>
<rect x="1134" y="189.37" width="1.4" height="13.91" fill="#d9d8bd"/>
<rect x="1017.4" y="145.24" width="1.4" height="13.91" fill="#d9d8bd"/>
<rect x="1017.4" y="159.95" width="1.4" height="13.91" fill="#d9d8bd"/>
<rect x="1017.4" y="174.66" width="1.4" height="13.91" fill="#d9d8bd"/>
<rect x="1017.4" y="189.37" width="1.4" height="13.91" fill="#d9d8bd"/>
<rect x="1017.4" y="204.08" width="1.4" height="13.91" fill="#d9d8bd"/>
<rect x="1017.4" y="218.79" width="1.4" height="13.91" fill="#d9d8bd"/>
<rect x="1017.4" y="233.5" width="1.4" height="13.91" fill="#d9d8bd"/>
<rect x="1017.4" y="248.21" width="1.4" height="13.91" fill="#d9d8bd"/>
<rect x="1017.4" y="262.92" width="1.4" height="13.91" fill="#d9d8bd"/>
<rect x="1017.4" y="277.63" width="1.4" height="13.91" fill="#7fa0d9"/>
<rect x="1025.6" y="145.24" width="0.9" height="13.91" fill="#7c8da6"/>
<rect x="1025.6" y="159.95" width="0.9" height="13.91" fill="#7c8da6"/>
<rect x="1025.6" y="174.66" width="0.9" height="13.91" fill="#7c8da6"/>
<rect x="1025.6" y="189.37" width="0.9" height="13.91" fill="#7c8da6"/>
<rect x="1025.6" y="204.08" width="0.9" height="13.91" fill="#7c8da6"/>
<rect x="1025.6" y="218.79" width="0.9" height="13.91" fill="#7c8da6"/>
<rect x="1025.6" y="233.5" width="0.9" height="13.91" fill="#7c8da6"/>
<rect x="1096.4" y="189.37" width="2.6" height="13.91" fill="#f6f5d5"/>
<rect x="1096.4" y="204.08" width="2.6" height="13.91" fill="#f6f5d5"/>
<rect x="1096.4" y="218.79" width="2.6" height="13.91" fill="#f6f5d5"/>
<rect x="1096.4" y="233.5" width="2.6" height="13.91" fill="#f6f5d5"/>
<rect x="1096.4" y="248.21" width="2.6" height="13.91" fill="#f6f5d5"/>
<rect x="1096.4" y="262.92" width="2.6" height="13.91" fill="#f6f5d5"/>
<rect x="1096.4" y="277.63" width="2.6" height="13.91" fill="#f6f5d5"/>
<rect x="1096.4" y="292.34" width="2.6" height="13.91" fill="#f6f5d5"/>
<rect x="1096.4" y="307.05" width="2.6" height="13.91" fill="#f6f5d5"/>
<rect x="1099.8" y="189.37" width="1.4" height="13.91" fill="#f6f5d5"/>
<rect x="1099.8" y="204.08" width="1.4" height="13.91" fill="#f6f5d5"/>
<rect x="1099.8" y="218.79" width="1.4" height="13.91" fill="#f6f5d5"/>
<rect x="1099.8" y="233.5" width="1.4" height="13.91" fill="#f6f5d5"/>
<rect x="1099.8" y="248.21" width="1.4" height="13.91" fill="#f6f5d5"/>
<rect x="1099.8" y="262.92" width="1.4" height="13.91" fill="#f6f5d5"/>
<rect x="1099.8" y="277.63" width="1.4" height="13.91" fill="#f6f5d5"/>
<rect x="1099.8" y="292.34" width="1.4" height="13.91" fill="#f6f5d5"/>
<rect x="1099.8" y="307.05" width="1.4" height="13.91" fill="#f6f5d5"/>
<rect x="1163.3" y="174.66" width="3.4" height="13.91" fill="#bfe0e6"/>
<rect x="1163.3" y="189.37" width="3.4" height="13.91" fill="#bfe0e6"/>
<rect x="1163.3" y="204.08" width="3.4" height="13.91" fill="#bfe0e6"/>
<rect x="1163.6" y="218.79" width="1.6" height="13.91" fill="#c2e6e2"/>
<rect x="1163.6" y="233.5" width="1.6" height="13.91" fill="#c2e6e2"/>
<rect x="1163.6" y="248.21" width="1.6" height="13.91" fill="#c2e6e2"/>
<rect x="1163.6" y="262.92" width="1.6" height="13.91" fill="#c2e6e2"/>
<rect x="1163.6" y="277.63" width="1.6" height="13.91" fill="#c2e6e2"/>
<rect x="1163.6" y="292.34" width="1.6" height="13.91" fill="#c2e6e2"/>
<rect x="1175.7" y="174.66" width="1.3" height="13.91" fill="#d0eaf9"/>
<rect x="1175.7" y="189.37" width="1.3" height="13.91" fill="#d0eaf9"/>
<rect x="1175.7" y="204.08" width="1.3" height="13.91" fill="#d0eaf9"/>
<rect x="1175.7" y="218.79" width="1.3" height="13.91" fill="#d0eaf9"/>
<rect x="1275.6" y="42.27" width="1.4" height="13.91" fill="#8596ad"/>
<rect x="1278.7" y="42.27" width="3.1" height="13.91" fill="#b9bf9a"/>
<rect x="1283" y="42.27" width="2.2" height="13.91" fill="#d9c066"/>
<rect x="1286" y="42.27" width="2.4" height="13.91" fill="#c3d9e4"/>
<rect x="1292.2" y="42.27" width="0.8" height="13.91" fill="#d3b85e"/>
<rect x="1293.8" y="42.27" width="1.4" height="13.91" fill="#a9c3d3"/>
<rect x="1275.6" y="56.98" width="1.4" height="13.91" fill="#8596ad"/>
<rect x="1278.7" y="56.98" width="3.1" height="13.91" fill="#b9d6c9"/>
<rect x="1283" y="56.98" width="2.2" height="13.91" fill="#c0dcc6"/>
<rect x="1286" y="56.98" width="2.4" height="13.91" fill="#c0e6dc"/>
<rect x="1292.2" y="56.98" width="0.8" height="13.91" fill="#8596ad"/>
<rect x="1293.8" y="56.98" width="1.4" height="13.91" fill="#a9c3d3"/>
<rect x="1275.6" y="71.69" width="1.4" height="13.91" fill="#8596ad"/>
<rect x="1278.7" y="71.69" width="3.1" height="13.91" fill="#b9bf9a"/>
<rect x="1283" y="71.69" width="2.2" height="13.91" fill="#d9c066"/>
<rect x="1286" y="71.69" width="2.4" height="13.91" fill="#c3d9e4"/>
<rect x="1292.2" y="71.69" width="0.8" height="13.91" fill="#d3b85e"/>
<rect x="1293.8" y="71.69" width="1.4" height="13.91" fill="#a9c3d3"/>
<rect x="1275.6" y="86.4" width="1.4" height="13.91" fill="#8596ad"/>
<rect x="1278.7" y="86.4" width="3.1" height="13.91" fill="#b9d6c9"/>
<rect x="1283" y="86.4" width="2.2" height="13.91" fill="#c0dcc6"/>
<rect x="1286" y="86.4" width="2.4" height="13.91" fill="#c0e6dc"/>
<rect x="1292.2" y="86.4" width="0.8" height="13.91" fill="#8596ad"/>
<rect x="1293.8" y="86.4" width="1.4" height="13.91" fill="#a9c3d3"/>
<rect x="1275.8" y="101.11" width="1" height="13.91" fill="#74869f"/>
<rect x="1280.3" y="101.11" width="2.7" height="13.91" fill="#e8cd62"/>
<rect x="1283.8" y="101.11" width="1.9" height="13.91" fill="#e8cd62"/>
<rect x="1286.5" y="101.11" width="1.9" height="13.91" fill="#b9dcd9"/>
<rect x="1292.4" y="101.11" width="0.6" height="13.91" fill="#8596ad"/>
<rect x="1275.8" y="115.82" width="1" height="13.91" fill="#74869f"/>
<rect x="1280.3" y="115.82" width="2.7" height="13.91" fill="#d9c77a"/>
<rect x="1283.8" y="115.82" width="1.9" height="13.91" fill="#b9d6c9"/>
<rect x="1286.5" y="115.82" width="1.9" height="13.91" fill="#b9dcd9"/>
<rect x="1292.4" y="115.82" width="0.6" height="13.91" fill="#8596ad"/>
<rect x="1293.7" y="101.11" width="1.3" height="13.91" fill="#e8cd62"/>
<rect x="1293.8" y="115.82" width="1" height="13.91" fill="#8fa3bb"/>
<rect x="1287.2" y="130.53" width="1.6" height="13.91" fill="#c9b56a"/>
<rect x="1318.6" y="42.27" width="5" height="13.91" fill="#d0eaf9"/>
<rect x="1318.6" y="56.98" width="5" height="13.91" fill="#d0eaf9"/>
<rect x="1318.6" y="71.69" width="5" height="13.91" fill="#d0eaf9"/>
<rect x="1318.6" y="86.4" width="5" height="13.91" fill="#d0eaf9"/>
<rect x="1318.6" y="101.11" width="5" height="13.91" fill="#d0eaf9"/>
<rect x="1318.6" y="115.82" width="5" height="13.91" fill="#d0eaf9"/>
<rect x="1318.6" y="130.53" width="5" height="13.91" fill="#d0eaf9"/>
<rect x="1318.6" y="145.24" width="5" height="13.91" fill="#d0eaf9"/>
<rect x="1318.6" y="159.95" width="5" height="13.91" fill="#d0eaf9"/>
<rect x="1318.6" y="174.66" width="5" height="13.91" fill="#d0eaf9"/>
<rect x="1318.6" y="189.37" width="5" height="13.91" fill="#d0eaf9"/>
<rect x="1318.6" y="204.08" width="5" height="13.91" fill="#d0eaf9"/>
<rect x="1318.6" y="218.79" width="5" height="13.91" fill="#d0eaf9"/>
<rect x="1318.6" y="233.5" width="5" height="13.91" fill="#d0eaf9"/>
<rect x="1318.6" y="248.21" width="5" height="13.91" fill="#d0eaf9"/>
<rect x="1318.6" y="262.92" width="5" height="13.91" fill="#d0eaf9"/>
<rect x="1318.6" y="277.63" width="5" height="13.91" fill="#d0eaf9"/>
<rect x="1318.6" y="292.34" width="5" height="13.91" fill="#d0eaf9"/>
<rect x="1318.6" y="307.05" width="5" height="13.91" fill="#d0eaf9"/>
<rect x="1318.6" y="321.76" width="5" height="13.91" fill="#d0eaf9"/>
<rect x="1318.6" y="336.47" width="5" height="13.91" fill="#d0eaf9"/>
<rect x="1318.6" y="351.18" width="5" height="13.91" fill="#d0eaf9"/>
<rect x="1324.6" y="42.27" width="2" height="13.91" fill="#d0eaf9"/>
<rect x="1324.6" y="56.98" width="2" height="13.91" fill="#d0eaf9"/>
<rect x="1324.6" y="71.69" width="2" height="13.91" fill="#d0eaf9"/>
<rect x="1324.6" y="86.4" width="2" height="13.91" fill="#d0eaf9"/>
<rect x="1324.6" y="101.11" width="2" height="13.91" fill="#e6dca6"/>
<rect x="1324.6" y="115.82" width="2" height="13.91" fill="#d0eaf9"/>
<rect x="1324.6" y="130.53" width="2" height="13.91" fill="#d0eaf9"/>
<rect x="1324.6" y="145.24" width="2" height="13.91" fill="#d0eaf9"/>
<rect x="1324.6" y="159.95" width="2" height="13.91" fill="#d0eaf9"/>
<rect x="1324.6" y="174.66" width="2" height="13.91" fill="#d0eaf9"/>
<rect x="1324.6" y="189.37" width="2" height="13.91" fill="#e6dca6"/>
<rect x="1324.6" y="204.08" width="2" height="13.91" fill="#e6dca6"/>
<rect x="1324.6" y="218.79" width="2" height="13.91" fill="#d0eaf9"/>
<rect x="1324.6" y="233.5" width="2" height="13.91" fill="#e6dca6"/>
<rect x="1324.6" y="248.21" width="2" height="13.91" fill="#e6dca6"/>
<rect x="1325" y="262.92" width="0.8" height="13.91" fill="#9fb2c8"/>
<rect x="1325" y="277.63" width="0.8" height="13.91" fill="#9fb2c8"/>
<rect x="1325" y="292.34" width="0.8" height="13.91" fill="#9fb2c8"/>
<rect x="1325" y="307.05" width="0.8" height="13.91" fill="#9fb2c8"/>
<rect x="1325" y="321.76" width="0.8" height="13.91" fill="#9fb2c8"/>
<rect x="1325" y="336.47" width="0.8" height="13.91" fill="#d9cf9c"/>
<rect x="1325" y="351.18" width="0.8" height="13.91" fill="#d9cf9c"/>
<rect x="1325" y="365.89" width="0.8" height="13.91" fill="#d9cf9c"/>
<rect x="1313.2" y="42.27" width="1" height="13.91" fill="#71839c"/>
<rect x="1313.2" y="56.98" width="1" height="13.91" fill="#71839c"/>
<rect x="1313.2" y="71.69" width="1" height="13.91" fill="#71839c"/>
<rect x="1313.2" y="86.4" width="1" height="13.91" fill="#71839c"/>
<rect x="1313.2" y="101.11" width="1" height="13.91" fill="#71839c"/>
<rect x="1313.2" y="115.82" width="1" height="13.91" fill="#71839c"/>
<rect x="1313.4" y="130.53" width="1" height="13.91" fill="#c9ae5a"/>
<rect x="1313.4" y="233.5" width="1" height="13.91" fill="#c9ae5a"/>
<rect x="1313.4" y="145.24" width="0.8" height="13.91" fill="#6b7d97"/>
<rect x="1313.4" y="159.95" width="0.8" height="13.91" fill="#6b7d97"/>
<rect x="1313.4" y="174.66" width="0.8" height="13.91" fill="#6b7d97"/>
<rect x="1313.4" y="189.37" width="0.8" height="13.91" fill="#6b7d97"/>
<rect x="1313.4" y="204.08" width="0.8" height="13.91" fill="#6b7d97"/>
<rect x="1313.4" y="218.79" width="0.8" height="13.91" fill="#6b7d97"/>
<rect x="1313.4" y="248.21" width="0.8" height="13.91" fill="#6b7d97"/>
<rect x="1313.4" y="262.92" width="0.8" height="13.91" fill="#6b7d97"/>
<rect x="1313.4" y="277.63" width="0.8" height="13.91" fill="#6b7d97"/>
<rect x="1313.4" y="292.34" width="0.8" height="13.91" fill="#6b7d97"/>
<rect x="1331" y="42.27" width="7" height="13.91" fill="#d0eaf9"/>
<rect x="1331" y="56.98" width="7" height="13.91" fill="#d0eaf9"/>
<rect x="1331" y="71.69" width="7" height="13.91" fill="#d0eaf9"/>
<rect x="1331" y="86.4" width="7" height="13.91" fill="#d0eaf9"/>
<rect x="1331" y="101.11" width="7" height="13.91" fill="#d0eaf9"/>
<rect x="1331" y="115.82" width="7" height="13.91" fill="#e5d6f2"/>
<rect x="1331" y="130.53" width="3.4" height="13.91" fill="#cbc9e0"/>
<rect x="1335" y="130.53" width="3" height="13.91" fill="#e5d6f2"/>
<rect x="1332.4" y="145.24" width="1.2" height="13.91" fill="#bfd2e4"/>
<rect x="1335.2" y="145.24" width="2.2" height="13.91" fill="#d0eaf9"/>
<rect x="1336" y="159.95" width="1.6" height="13.91" fill="#e5d6f2"/>
<rect x="1336" y="174.66" width="1.6" height="13.91" fill="#e5d6f2"/>
<rect x="897.3" y="395.31" width="57.7" height="13.91" fill="#d0eaf9"/>
<rect x="958.4" y="395.31" width="52.9" height="13.91" fill="#d0eaf9"/>
<rect x="897.3" y="410.02" width="57.7" height="13.91" fill="#cdf8e8"/>
<rect x="958.4" y="410.02" width="52.9" height="13.91" fill="#cdf8e8"/>
<rect x="897.3" y="424.73" width="57.7" height="13.91" fill="#cdf8e8"/>
<rect x="958.4" y="424.73" width="52.9" height="13.91" fill="#cdf8e8"/>
<rect x="955.6" y="395.31" width="2" height="13.91" fill="#cdf8e8"/>
<rect x="955.6" y="410.02" width="2" height="13.91" fill="#cdf8e8"/>
<rect x="955.6" y="424.73" width="2" height="13.91" fill="#cdf8e8"/>
<rect x="558" y="395.31" width="20.8" height="13.91" fill="#c4efe4"/>
<rect x="582.5" y="395.31" width="56.3" height="13.91" fill="#c4efe4"/>
<rect x="643" y="395.31" width="17.6" height="13.91" fill="#c4efe4"/>
<rect x="665.6" y="395.31" width="3.8" height="13.91" fill="#c4efe4"/>
<rect x="671" y="395.31" width="14.8" height="13.91" fill="#c4efe4"/>
<rect x="690.4" y="395.31" width="0.6" height="13.91" fill="#bfd2e4"/>
<rect x="694.6" y="395.31" width="0.8" height="13.91" fill="#bfd2e4"/>
<rect x="698" y="395.31" width="1.2" height="13.91" fill="#bfd2e4"/>
<rect x="709.4" y="395.31" width="0.6" height="13.91" fill="#8fa0b8"/>
<rect x="723.4" y="395.31" width="2" height="13.91" fill="#c4efe4"/>
<rect x="727" y="395.31" width="2" height="13.91" fill="#c4efe4"/>
<rect x="729.8" y="395.31" width="0.8" height="13.91" fill="#fcd95b"/>
<rect x="732" y="395.31" width="38.2" height="13.91" fill="#c4efe4"/>
<rect x="771" y="395.31" width="0.8" height="13.91" fill="#fcd95b"/>
<rect x="774.6" y="395.31" width="5.4" height="13.91" fill="#c4efe4"/>
<rect x="782.4" y="395.31" width="3.8" height="13.91" fill="#c4efe4"/>
<rect x="788.4" y="395.31" width="4.4" height="13.91" fill="#c4efe4"/>
<rect x="805" y="395.31" width="1.6" height="13.91" fill="#d0eaf9"/>
<rect x="558" y="410.02" width="3.15" height="13.91" fill="#c4efe4"/>
<rect x="561.59" y="410.02" width="5.17" height="13.91" fill="#c4efe4"/>
<rect x="567.18" y="410.02" width="3.38" height="13.91" fill="#c4efe4"/>
<rect x="571.01" y="410.02" width="1.99" height="13.91" fill="#c4efe4"/>
<rect x="573.43" y="410.02" width="3.91" height="13.91" fill="#c4efe4"/>
<rect x="577.84" y="410.02" width="1.6" height="13.91" fill="#c4efe4"/>
<rect x="586.4" y="410.02" width="5.42" height="13.91" fill="#c4efe4"/>
<rect x="592.36" y="410.02" width="4.01" height="13.91" fill="#c4efe4"/>
<rect x="596.83" y="410.02" width="1.88" height="13.91" fill="#c4efe4"/>
<rect x="599.01" y="410.02" width="3.47" height="13.91" fill="#c4efe4"/>
<rect x="602.8" y="410.02" width="2.02" height="13.91" fill="#c4efe4"/>
<rect x="605.18" y="410.02" width="1.33" height="13.91" fill="#c4efe4"/>
<rect x="606.92" y="410.02" width="3.09" height="13.91" fill="#c4efe4"/>
<rect x="610.53" y="410.02" width="3.43" height="13.91" fill="#c4efe4"/>
<rect x="614.42" y="410.02" width="3.35" height="13.91" fill="#c4efe4"/>
<rect x="618.23" y="410.02" width="3.17" height="13.91" fill="#c4efe4"/>
<rect x="621.77" y="410.02" width="5.49" height="13.91" fill="#c4efe4"/>
<rect x="627.81" y="410.02" width="4.81" height="13.91" fill="#c4efe4"/>
<rect x="633.1" y="410.02" width="2.56" height="13.91" fill="#c4efe4"/>
<rect x="636.01" y="410.02" width="2.44" height="13.91" fill="#c4efe4"/>
<rect x="638.77" y="410.02" width="4.5" height="13.91" fill="#c4efe4"/>
<rect x="643.67" y="410.02" width="4.84" height="13.91" fill="#c4efe4"/>
<rect x="648.9" y="410.02" width="5.32" height="13.91" fill="#c4efe4"/>
<rect x="654.74" y="410.02" width="1.2" height="13.91" fill="#c4efe4"/>
<rect x="656.29" y="410.02" width="5.11" height="13.91" fill="#c4efe4"/>
<rect x="667.64" y="410.02" width="1.51" height="13.91" fill="#c4efe4"/>
<rect x="669.61" y="410.02" width="4.55" height="13.91" fill="#c4efe4"/>
<rect x="674.52" y="410.02" width="1.57" height="13.91" fill="#c4efe4"/>
<rect x="676.48" y="410.02" width="5.35" height="13.91" fill="#c4efe4"/>
<rect x="682.32" y="410.02" width="1.71" height="13.91" fill="#c4efe4"/>
<rect x="684.39" y="410.02" width="1.61" height="13.91" fill="#c4efe4"/>
<rect x="652.6" y="410.02" width="1.8" height="13.91" fill="#b9a9e0"/>
<rect x="671" y="410.02" width="1.8" height="13.91" fill="#fcd95b"/>
<rect x="698.6" y="410.02" width="1.4" height="13.91" fill="#fcd95b"/>
<rect x="727" y="410.02" width="2" height="13.91" fill="#c4efe4"/>
<rect x="729.8" y="410.02" width="0.8" height="13.91" fill="#fcd95b"/>
<rect x="732" y="410.02" width="9.6" height="13.91" fill="#c4efe4"/>
<rect x="742.4" y="410.02" width="1.2" height="13.91" fill="#fcd95b"/>
<rect x="744.4" y="410.02" width="13.6" height="13.91" fill="#c4efe4"/>
<rect x="758.8" y="410.02" width="1.8" height="13.91" fill="#fcd95b"/>
<rect x="762.8" y="410.02" width="6.8" height="13.91" fill="#fcd95b"/>
<rect x="774.6" y="410.02" width="4.2" height="13.91" fill="#fcd95b"/>
<rect x="779.6" y="410.02" width="1.6" height="13.91" fill="#c4efe4"/>
<rect x="785" y="410.02" width="1.4" height="13.91" fill="#fcd95b"/>
<rect x="787.2" y="410.02" width="5.6" height="13.91" fill="#c4efe4"/>
<rect x="805" y="410.02" width="1.6" height="13.91" fill="#fcd95b"/>
<rect x="558" y="424.73" width="5.03" height="13.91" fill="#c4efe4"/>
<rect x="563.37" y="424.73" width="3.88" height="13.91" fill="#c4efe4"/>
<rect x="567.67" y="424.73" width="2.12" height="13.91" fill="#c4efe4"/>
<rect x="570.26" y="424.73" width="1.83" height="13.91" fill="#c4efe4"/>
<rect x="572.55" y="424.73" width="1.76" height="13.91" fill="#c4efe4"/>
<rect x="574.72" y="424.73" width="2.22" height="13.91" fill="#c4efe4"/>
<rect x="577.31" y="424.73" width="5.86" height="13.91" fill="#c4efe4"/>
<rect x="583.67" y="424.73" width="2.66" height="13.91" fill="#c4efe4"/>
<rect x="586.85" y="424.73" width="2.21" height="13.91" fill="#c4efe4"/>
<rect x="589.46" y="424.73" width="5.3" height="13.91" fill="#c4efe4"/>
<rect x="595.22" y="424.73" width="1.68" height="13.91" fill="#c4efe4"/>
<rect x="597.45" y="424.73" width="2.22" height="13.91" fill="#c4efe4"/>
<rect x="600.04" y="424.73" width="4.91" height="13.91" fill="#c4efe4"/>
<rect x="605.33" y="424.73" width="2.62" height="13.91" fill="#c4efe4"/>
<rect x="608.27" y="424.73" width="1.63" height="13.91" fill="#c4efe4"/>
<rect x="610.35" y="424.73" width="2.37" height="13.91" fill="#c4efe4"/>
<rect x="613.17" y="424.73" width="2.98" height="13.91" fill="#c4efe4"/>
<rect x="616.56" y="424.73" width="5.8" height="13.91" fill="#c4efe4"/>
<rect x="622.79" y="424.73" width="3.96" height="13.91" fill="#c4efe4"/>
<rect x="627.26" y="424.73" width="2.08" height="13.91" fill="#c4efe4"/>
<rect x="629.68" y="424.73" width="4.32" height="13.91" fill="#c4efe4"/>
<rect x="635" y="424.73" width="3.6" height="13.91" fill="#fcd95b"/>
<rect x="643.6" y="424.73" width="1.6" height="13.91" fill="#fcd95b"/>
<rect x="646" y="424.73" width="0.8" height="13.91" fill="#c4efe4"/>
<rect x="647.6" y="424.73" width="1.2" height="13.91" fill="#fcd95b"/>
<rect x="649.6" y="424.73" width="10.6" height="13.91" fill="#c4efe4"/>
<rect x="665" y="424.73" width="4.2" height="13.91" fill="#c4efe4"/>
<rect x="671" y="424.73" width="14.8" height="13.91" fill="#c4efe4"/>
<rect x="710.4" y="424.73" width="0.8" height="13.91" fill="#e5d6f2"/>
<rect x="722.6" y="424.73" width="1.2" height="13.91" fill="#fcd95b"/>
<rect x="727" y="424.73" width="14.2" height="13.91" fill="#fcd95b"/>
<rect x="744.2" y="424.73" width="14.6" height="13.91" fill="#fcd95b"/>
<rect x="760.6" y="424.73" width="1.6" height="13.91" fill="#fcd95b"/>
<rect x="763" y="424.73" width="1.2" height="13.91" fill="#b9ab68"/>
<rect x="765" y="424.73" width="0.8" height="13.91" fill="#e5d6f2"/>
<rect x="766.6" y="424.73" width="1" height="13.91" fill="#fcd95b"/>
<rect x="768.4" y="424.73" width="0.8" height="13.91" fill="#7fa0d9"/>
<rect x="770" y="424.73" width="1.6" height="13.91" fill="#b9ab68"/>
<rect x="772.4" y="424.73" width="2.8" height="13.91" fill="#fcd95b"/>
<rect x="776" y="424.73" width="0.8" height="13.91" fill="#e5d6f2"/>
<rect x="777.6" y="424.73" width="1.6" height="13.91" fill="#b9ab68"/>
<rect x="780" y="424.73" width="2.2" height="13.91" fill="#fcd95b"/>
<rect x="784.4" y="424.73" width="1.4" height="13.91" fill="#fcd95b"/>
<rect x="788.4" y="424.73" width="4.4" height="13.91" fill="#fcd95b"/>
<rect x="807.4" y="424.73" width="0.6" height="13.91" fill="#b9a46a"/>
<rect x="847.4" y="395.31" width="1.8" height="13.91" fill="#d0eaf9"/>
<rect x="850" y="395.31" width="2.2" height="13.91" fill="#c2dcec"/>
<rect x="853" y="395.31" width="4" height="13.91" fill="#d0eaf9"/>
<rect x="860" y="395.31" width="1.2" height="13.91" fill="#d9cf9c"/>
<rect x="867" y="395.31" width="1.2" height="13.91" fill="#e6dca6"/>
<rect x="872.6" y="395.31" width="0.8" height="13.91" fill="#a9bcd0"/>
<rect x="847.4" y="410.02" width="1.8" height="13.91" fill="#d0eaf9"/>
<rect x="850" y="410.02" width="2.2" height="13.91" fill="#c2dcec"/>
<rect x="853" y="410.02" width="4" height="13.91" fill="#d0eaf9"/>
<rect x="860" y="410.02" width="1.2" height="13.91" fill="#d9cf9c"/>
<rect x="867" y="410.02" width="1.2" height="13.91" fill="#e6dca6"/>
<rect x="872.6" y="410.02" width="0.8" height="13.91" fill="#a9bcd0"/>
<rect x="847.4" y="424.73" width="1.8" height="13.91" fill="#d0eaf9"/>
<rect x="850" y="424.73" width="2.2" height="13.91" fill="#c2dcec"/>
<rect x="853" y="424.73" width="4" height="13.91" fill="#d0eaf9"/>
<rect x="860" y="424.73" width="1.2" height="13.91" fill="#d9cf9c"/>
<rect x="867" y="424.73" width="1.2" height="13.91" fill="#e6dca6"/>
<rect x="872.6" y="424.73" width="0.8" height="13.91" fill="#a9bcd0"/>
<rect x="890" y="395.31" width="1.6" height="13.91" fill="#fcd95b"/>
<rect x="1096.4" y="395.31" width="0.8" height="13.91" fill="#c9c4a0"/>
<rect x="1096.4" y="410.02" width="0.8" height="13.91" fill="#c9c4a0"/>
<rect x="1096.4" y="424.73" width="0.8" height="13.91" fill="#c9c4a0"/>
<rect x="1098.2" y="395.31" width="0.8" height="13.91" fill="#a9a890"/>
<rect x="1098.2" y="410.02" width="0.8" height="13.91" fill="#a9a890"/>
<rect x="1098.2" y="424.73" width="0.8" height="13.91" fill="#a9a890"/>
</g>
<rect x="543" y="0" width="634.6" height="12.05" fill="url(#hatch)"/>
<path d="M1171.5 0H1177.6V5.6Z" fill="#ee4444"/>
<rect x="24.5" y="0" width="0.7" height="432" fill="#ffffff" fill-opacity="0.07"/>
<rect x="133.8" y="0" width="0.7" height="432" fill="#ffffff" fill-opacity="0.07"/>
<rect x="243.1" y="0" width="0.7" height="432" fill="#ffffff" fill-opacity="0.07"/>
<rect x="352.4" y="0" width="0.7" height="432" fill="#ffffff" fill-opacity="0.07"/>
<rect x="461.7" y="0" width="0.7" height="432" fill="#ffffff" fill-opacity="0.07"/>
<rect x="571" y="0" width="0.7" height="432" fill="#ffffff" fill-opacity="0.07"/>
<rect x="680.3" y="0" width="0.7" height="432" fill="#ffffff" fill-opacity="0.07"/>
<rect x="789.6" y="0" width="0.7" height="432" fill="#ffffff" fill-opacity="0.07"/>
<rect x="898.9" y="0" width="0.7" height="432" fill="#ffffff" fill-opacity="0.07"/>
<rect x="1008.2" y="0" width="0.7" height="432" fill="#ffffff" fill-opacity="0.07"/>
<rect x="1117.5" y="0" width="0.7" height="432" fill="#ffffff" fill-opacity="0.07"/>
<rect x="1226.8" y="0" width="0.7" height="432" fill="#ffffff" fill-opacity="0.07"/>
<rect x="1336.1" y="0" width="0.7" height="432" fill="#ffffff" fill-opacity="0.07"/>
<g opacity="0.85" filter="url(#soft)">
<text x="3" y="9.7" fill="#777777">Task</text>
<text x="1183.5" y="9.7" fill="#777777">Task</text>
<text x="3.95" y="23.7" fill="#5f5f5f">XHR Ready State Change</text>
<text x="1183.05" y="23.7" fill="#85738f">Recalcu<tspan font-size="7.8">…</tspan> Style</text>
<text x="3.85" y="38.41" fill="#5f5f5f">Function Call</text>
<text x="167.45" y="38.41" fill="#5f5f5f">Run Microtasks</text>
<text x="5.95" y="53.12" fill="#5f5f5f">n</text>
<text x="5.95" y="67.83" fill="#5f5f5f">(anonymous)</text>
<text x="5.95" y="82.54" fill="#5f5f5f">ar.emit</text>
<text x="5.95" y="97.25" fill="#5f5f5f">(anonymous)</text>
<text x="5.95" y="111.96" fill="#5f5f5f">kr.callback</text>
<text x="9.25" y="126.67" fill="#5f5f5f">(anonymous)</text>
<text x="9.25" y="141.38" fill="#5f5f5f">(anonymous)</text>
<text x="27.95" y="156.09" fill="#5f5f5f">dispatch</text>
<text x="27.95" y="170.8" fill="#5f5f5f">(anonymous)</text>
<text x="27.95" y="185.51" fill="#5f5f5f">(anonymous)</text>
<text x="27.95" y="200.22" fill="#5f5f5f">(anonymous)</text>
<text x="27.95" y="214.93" fill="#5f5f5f">(anonymous)</text>
<text x="27.95" y="229.64" fill="#5f5f5f">(anonymous)</text>
<text x="27.95" y="244.35" fill="#5f5f5f">(anonymous)</text>
<text x="33.75" y="259.06" fill="#5f5f5f">(anonymous)</text>
<text x="33.75" y="273.77" fill="#5f5f5f">(anonymous)</text>
<text x="33.75" y="288.48" fill="#5f5f5f">(anonymous)</text>
<text x="33.75" y="303.19" fill="#5f5f5f">(anonymous)</text>
<text x="33.75" y="317.9" fill="#5f5f5f">(anonymous)</text>
<text x="33.75" y="332.61" fill="#5f5f5f">(anonymous)</text>
<text x="33.75" y="347.32" fill="#5f5f5f">pr</text>
<text x="33.75" y="362.03" fill="#5f5f5f">p</text>
<text x="78.25" y="362.03" fill="#5f5f5f">cr</text>
<text x="33.75" y="376.74" fill="#5f5f5f">(an<tspan font-size="7.8">…</tspan>s)</text>
<text x="78.25" y="376.74" fill="#5f5f5f">Rk</text>
<text x="33.75" y="391.45" fill="#5f5f5f">(an<tspan font-size="7.8">…</tspan>s)</text>
<text x="78.25" y="391.45" fill="#5f5f5f">lr</text>
<text x="33.75" y="406.16" fill="#5f5f5f">nin</text>
<text x="78.25" y="406.16" fill="#5f5f5f">fr</text>
<text x="33.75" y="420.87" fill="#5f5f5f">tS</text>
<text x="78.25" y="420.87" fill="#5f5f5f">notify</text>
<text x="33.75" y="435.58" fill="#5f5f5f">Han</text>
<text x="78.25" y="435.58" fill="#5f5f5f">Rk</text>
<text x="167.45" y="53.12" fill="#5f5f5f">Function Call</text>
<text x="168.25" y="67.83" fill="#5f5f5f">(anonymous)</text>
<text x="168.25" y="82.54" fill="#5f5f5f">Fl</text>
<text x="168.25" y="97.25" fill="#5f5f5f">fR</text>
<text x="168.25" y="111.96" fill="#5f5f5f">jv</text>
<text x="168.25" y="126.67" fill="#5f5f5f">OM</text>
<text x="222.05" y="126.67" fill="#5f5f5f">OM</text>
<text x="351.05" y="126.67" fill="#5f5f5f">OM</text>
<text x="351.15" y="141.38" fill="#5f5f5f">oR</text>
<text x="399.25" y="67.83" fill="#5f5f5f">(anonymous)</text>
<text x="399.25" y="82.54" fill="#5f5f5f">Fl</text>
<text x="399.25" y="97.25" fill="#5f5f5f">fR</text>
<text x="399.25" y="111.96" fill="#5f5f5f">bW</text>
<text x="399.25" y="126.67" fill="#5f5f5f">vW</text>
<text x="499.25" y="126.67" fill="#5f5f5f">rd</text>
<text x="399.25" y="141.38" fill="#5f5f5f">_M</text>
<text x="399.25" y="156.09" fill="#5f5f5f">_M</text>
<text x="399.25" y="170.8" fill="#5f5f5f">_M</text>
<text x="399.25" y="185.51" fill="#5f5f5f">_M</text>
<text x="399.25" y="200.22" fill="#5f5f5f">_M</text>
<text x="399.25" y="214.93" fill="#5f5f5f">_M</text>
<text x="401.25" y="229.64" fill="#5f5f5f">_M</text>
<text x="402.45" y="244.35" fill="#5f5f5f">pR</text>
<text x="402.95" y="259.06" fill="#5f5f5f">compon<tspan font-size="7.8">…</tspan>Update</text>
<text x="402.95" y="273.77" fill="#5f5f5f">process<tspan font-size="7.8">…</tspan>hanges</text>
<text x="402.95" y="288.48" fill="#5f5f5f">processChanges</text>
<text x="402.95" y="303.19" fill="#5f5f5f">process<tspan font-size="7.8">…</tspan>nReady</text>
<text x="402.95" y="317.9" fill="#5f5f5f">(anonymous)</text>
<text x="402.95" y="332.61" fill="#5f5f5f">n.proce<tspan font-size="7.8">…</tspan>Change</text>
<text x="402.95" y="347.32" fill="#5f5f5f">n.setC<tspan font-size="7.8">…</tspan>nDefs</text>
<text x="402.95" y="362.03" fill="#5f5f5f">t.setC<tspan font-size="7.8">…</tspan>nDefs</text>
<text x="402.95" y="376.74" fill="#5f5f5f">t.crea<tspan font-size="7.8">…</tspan>nDefs</text>
<text x="411.95" y="391.45" fill="#5f5f5f">t.up<tspan font-size="7.8">…</tspan>mns</text>
<text x="411.95" y="406.16" fill="#5f5f5f">t.b<tspan font-size="7.8">…</tspan>ees</text>
<text x="411.95" y="420.87" fill="#5f5f5f">t.cr<tspan font-size="7.8">…</tspan>ups</text>
<text x="411.95" y="435.58" fill="#5f5f5f">t.s<tspan font-size="7.8">…</tspan>mns</text>
<text x="501.65" y="141.38" fill="#5f5f5f">qy</text>
<text x="508.05" y="156.09" fill="#5f5f5f">(anonymous)</text>
<text x="508.05" y="170.8" fill="#5f5f5f">ye</text>
<text x="715.95" y="170.8" fill="#5f5f5f">update</text>
<text x="528.25" y="185.51" fill="#5f5f5f">Cn</text>
<text x="724.25" y="185.51" fill="#5f5f5f">redraw</text>
<text x="528.25" y="200.22" fill="#5f5f5f">getArgs</text>
<text x="725.95" y="200.22" fill="#5f5f5f">getMargins</text>
<text x="528.25" y="214.93" fill="#5f5f5f">init</text>
<text x="725.95" y="214.93" fill="#5f5f5f">getAxi<tspan font-size="7.8">…</tspan>argins</text>
<text x="528.25" y="229.64" fill="#5f5f5f">Lr</text>
<text x="725.95" y="229.64" fill="#5f5f5f">Nn</text>
<text x="528.25" y="244.35" fill="#5f5f5f">(anonymous)</text>
<text x="725.95" y="244.35" fill="#5f5f5f">(anonymous)</text>
<text x="536.45" y="259.06" fill="#5f5f5f">firstRender</text>
<text x="725.95" y="259.06" fill="#5f5f5f">getOffset</text>
<text x="551.45" y="273.77" fill="#5f5f5f">render</text>
<text x="730.35" y="273.77" fill="#5f5f5f">(anon<tspan font-size="7.8">…</tspan>ous)</text>
<text x="562.15" y="288.48" fill="#5f5f5f">getAxisMargins</text>
<text x="668.05" y="288.48" fill="#5f5f5f">$n</text>
<text x="730.35" y="288.48" fill="#5f5f5f">generateTick</text>
<text x="562.15" y="303.19" fill="#5f5f5f">Nn</text>
<text x="668.05" y="303.19" fill="#5f5f5f">(<tspan font-size="7.8">…</tspan>)</text>
<text x="730.35" y="303.19" fill="#5f5f5f">br</text>
<text x="562.15" y="317.9" fill="#5f5f5f">(anonymous)</text>
<text x="669.45" y="317.9" fill="#5f5f5f">r<tspan font-size="7.8">…</tspan>r</text>
<text x="730.35" y="317.9" fill="#5f5f5f">addLabel</text>
<text x="877.75" y="82.54" fill="#5f5f5f">Fl</text>
<text x="877.75" y="97.25" fill="#5f5f5f">fR</text>
<text x="829.05" y="111.96" fill="#5f5f5f">jv</text>
<text x="899.05" y="53.12" fill="#5f5f5f">Cr</text>
<text x="899.05" y="67.83" fill="#5f5f5f">gr</text>
<text x="899.05" y="82.54" fill="#5f5f5f">pr.cont</text>
<text x="899.05" y="97.25" fill="#5f5f5f">wr</text>
<text x="899.05" y="111.96" fill="#5f5f5f">Cr</text>
<text x="899.05" y="126.67" fill="#5f5f5f">gr</text>
<text x="899.05" y="141.38" fill="#5f5f5f">yr</text>
<text x="899.05" y="156.09" fill="#5f5f5f">vr</text>
<text x="899.05" y="170.8" fill="#5f5f5f">runCancelEffect</text>
<text x="899.05" y="185.51" fill="#5f5f5f">Cr</text>
<text x="899.05" y="200.22" fill="#5f5f5f">gr</text>
<text x="899.05" y="214.93" fill="#5f5f5f">yr</text>
<text x="899.05" y="229.64" fill="#5f5f5f">vr</text>
<text x="899.05" y="244.35" fill="#5f5f5f">runCancelledEffect</text>
<text x="899.05" y="259.06" fill="#5f5f5f">Cr</text>
<text x="899.05" y="273.77" fill="#5f5f5f">gr</text>
<text x="902.55" y="288.48" fill="#5f5f5f">yr</text>
<text x="902.55" y="303.19" fill="#5f5f5f">vr</text>
<text x="902.55" y="317.9" fill="#5f5f5f">runPutEffect</text>
<text x="1020.05" y="53.12" fill="#5f5f5f">(anonymous)</text>
<text x="1020.05" y="67.83" fill="#8f8f8f">MutationBuf<tspan font-size="7.8">…</tspan>ssMutations</text>
<text x="1147.15" y="67.83" fill="#5f5f5f">i</text>
<text x="1020.05" y="82.54" fill="#5f5f5f">MutationBuf<tspan font-size="7.8">…</tspan>essMutations</text>
<text x="1147.15" y="82.54" fill="#5f5f5f">i</text>
<text x="1020.05" y="97.25" fill="#5f5f5f">isIgnored</text>
<text x="1020.05" y="111.96" fill="#5f5f5f">getId</text>
<text x="1020.05" y="126.67" fill="#5f5f5f">Function Call</text>
<text x="1118.15" y="141.38" fill="#5f5f5f">w<tspan font-size="7.8">…</tspan></text>
<text x="1118.15" y="156.09" fill="#5f5f5f">Er</text>
<text x="901.75" y="406.16" fill="#5f5f5f">dispatch</text>
<text x="962.25" y="406.16" fill="#5f5f5f">dispatch</text>
<text x="901.75" y="420.87" fill="#5f5f5f">(ano<tspan font-size="7.8">…</tspan>ous)</text>
<text x="962.25" y="420.87" fill="#5f5f5f">(ano<tspan font-size="7.8">…</tspan>us)</text>
<text x="901.75" y="435.58" fill="#5f5f5f">(ano<tspan font-size="7.8">…</tspan>ous)</text>
<text x="962.25" y="435.58" fill="#5f5f5f">(ano<tspan font-size="7.8">…</tspan>us)</text>
<text x="588.45" y="406.16" fill="#8a7f7f">crea<tspan font-size="7.8">…</tspan>bel</text>
</g>
</svg></div>
<div id="tip"><span class="t"><span class="ms">11.58 ms</span><span class="sp"> </span>MutationBuffer.processMutations</span></div>
</body></html>
